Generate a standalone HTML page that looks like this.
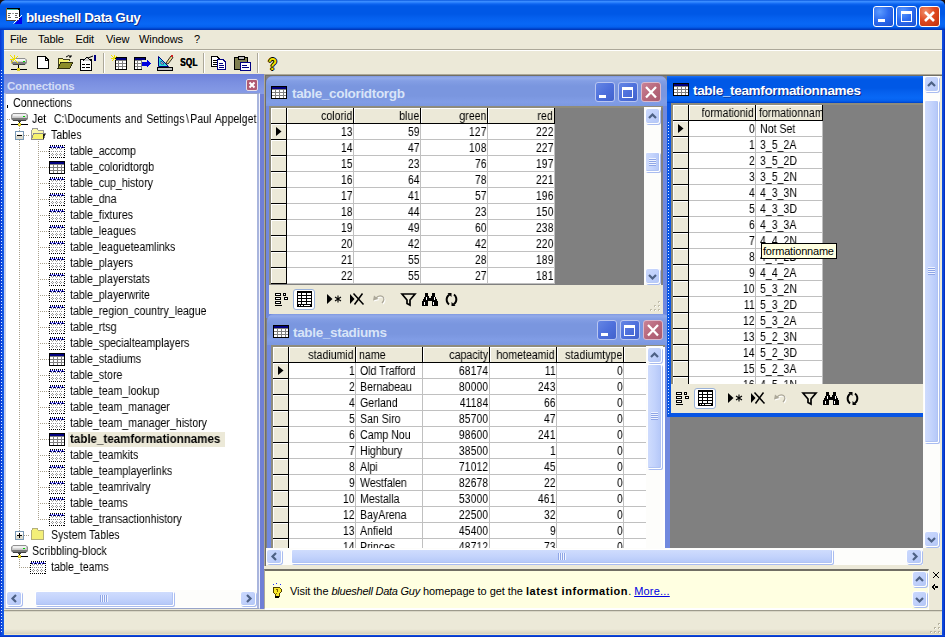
<!DOCTYPE html>
<html><head><meta charset="utf-8"><title>blueshell Data Guy</title>
<style>
*{box-sizing:border-box}
html,body{margin:0;padding:0}
body{width:945px;height:637px;overflow:hidden;position:relative;background:#ece9d8;font-family:"Liberation Sans",sans-serif;font-size:11px;color:#000;line-height:1}
.a{position:absolute}
.t{position:absolute;white-space:pre}
/* narrow bitmap-like font (MS Sans Serif look) */
.ms{will-change:transform;font-size:12.3px;display:inline-block;transform:scaleX(.86);transform-origin:0 50%;white-space:pre}
.msr{will-change:transform;font-size:12.3px;display:inline-block;transform:scaleX(.86);transform-origin:100% 50%;white-space:pre}
#title{left:0;top:0;width:945px;height:30px;background:linear-gradient(#0a58de 0,#3a8cff 1.5px,#2a80fc 2.5px,#0d64f0 4px,#0058e6 6px,#0058e6 14px,#0560ee 18px,#0868f6 24px,#0560ee 27px,#0048d0 28.5px,#0030b0 30px)}
.tb{position:absolute;top:6px;width:21px;height:21px;border:1px solid #fff;border-radius:3px;background:radial-gradient(circle at 30% 25%,#5c9bff 0,#2d6cf0 45%,#1c50d0 100%)}
.tb.cl{background:radial-gradient(circle at 30% 25%,#f0906c 0,#e04a22 45%,#c0300c 100%)}
.cb{position:absolute;width:20px;height:20px;border:1px solid #b9c6f1;border-radius:3px;background:linear-gradient(135deg,#6586e4 0,#4e70dc 50%,#4262cc 100%)}
.cb.cl{border-color:#d9b9cc;background:linear-gradient(135deg,#c98296 0,#b8687c 50%,#a85a70 100%)}
.menu{top:30px;height:19px;line-height:19px;font-size:11px}
.sb{background:#fdfdfb}
.sbtn{position:absolute;width:15px;height:15px;border:1px solid #fff;border-radius:3px;background:linear-gradient(135deg,#cad8fd 0,#c1d1fb 50%,#b3c6f7 100%);box-shadow:1px 1px 0 #a9bcf0,inset -1px -1px 0 #b7c9f5}
.thumbv{position:absolute;border:1px solid #fff;border-radius:2px;background:linear-gradient(90deg,#cfdcfd 0,#c3d3fc 50%,#b4c7f8 100%);box-shadow:1px 1px 0 #a9bcf0,inset -1px -1px 0 #b0c3f3}
.thumbh{position:absolute;border:1px solid #fff;border-radius:2px;background:linear-gradient(180deg,#cfdcfd 0,#c3d3fc 50%,#b4c7f8 100%);box-shadow:1px 1px 0 #a9bcf0,inset -1px -1px 0 #b0c3f3}
.hc{position:absolute;height:16px;background:#ece9d8;border-right:1px solid #000;border-bottom:1px solid #000;box-shadow:inset 1px 1px 0 #fff;overflow:hidden;line-height:15px}
.dc{position:absolute;height:16px;background:#fff;border-right:1px solid #c0c0c0;border-bottom:1px solid #c0c0c0;overflow:hidden;line-height:16px}
.r>span{position:absolute;right:1px;top:0}
.l>span{position:absolute;left:4px;top:0}
.hc>span{top:1px}
.hc.l>span{left:3px}
.dc.r>span{right:.5px}
.trow{position:absolute;left:0;height:16px;line-height:16px;white-space:pre}
svg{position:absolute;overflow:visible}
</style></head>
<body>
<div class="a" id="title"></div>
<div class="a" style="left:0;top:30px;width:4px;height:607px;background:linear-gradient(90deg,#0a34d0 0,#0c50e2 50%,#1a5fe8 100%)"></div>
<div class="a" style="left:942px;top:30px;width:3px;height:607px;background:linear-gradient(90deg,#0c50e2 0,#0a3fd4 60%,#0628b0 100%)"></div>
<div class="a" style="left:0;top:634.5px;width:945px;height:2.5px;background:linear-gradient(#0c50e2 0,#0a3fd4 60%,#0628b0 100%)"></div>
<div class="a" style="left:1px;top:70px;width:1px;height:564px;background:repeating-linear-gradient(180deg,#dfe8ff 0,#dfe8ff 1px,transparent 1px,transparent 3px)"></div>
<svg style="left:0;top:0" width="6" height="6" viewBox="0 0 6 6"><path d="M0 0 H5 Q1 1 0 5 Z" fill="#1a0f10"/></svg>
<svg style="left:939px;top:0" width="6" height="6" viewBox="0 0 6 6"><path d="M6 0 H1 Q5 1 6 5 Z" fill="#1a0f10"/></svg>
<svg style="left:6px;top:8px" width="16" height="16" viewBox="0 0 16 16" shape-rendering="crispEdges"><rect x="0" y="0" width="14" height="12" fill="#fff" stroke="none"/><rect x="0" y="0" width="14" height="2" fill="#000"/><rect x="1" y="1" width="11" height="1" fill="#30b0a0"/><rect x="0" y="0" width="1" height="12" fill="#806040"/><rect x="13" y="0" width="1" height="12" fill="#000"/><rect x="0" y="12" width="14" height="1" fill="#404040"/><rect x="2" y="5" width="3" height="1" fill="#606060"/><rect x="6" y="5" width="2" height="1" fill="#a0a0a0"/><rect x="9" y="5" width="3" height="1" fill="#606060"/><rect x="2" y="7" width="2" height="1" fill="#606060"/><rect x="9" y="7" width="2" height="1" fill="#606060"/><rect x="2" y="9" width="3" height="1" fill="#606060"/><rect x="9" y="9" width="3" height="1" fill="#606060"/><path d="M8 16 L16 8 V16 Z" fill="#0000f0"/><path d="M7.5 15.5 L16 7" stroke="#fff" stroke-width="1" fill="none" shape-rendering="auto"/></svg><div class="t" style="left:26px;top:10px;font-weight:bold;font-size:13.5px;line-height:16px;color:#fff;letter-spacing:-.4px;text-shadow:1px 1px 0 #0a2a8a">blueshell Data Guy</div><div class="tb" style="left:873px"></div><div class="tb" style="left:896px"></div><div class="tb cl" style="left:919px"></div>
<div class="a" style="left:878px;top:19px;width:7px;height:3px;background:#fff"></div>
<div class="a" style="left:901px;top:11px;width:11px;height:11px;border:1px solid #fff;border-top-width:3px"></div>
<svg style="left:919px;top:6px" width="21" height="21" viewBox="0 0 21 21"><path d="M6 6 L15 15 M15 6 L6 15" stroke="#fff" stroke-width="2.6" fill="none"/></svg><div class="t menu" style="left:10px;letter-spacing:-.1px">File</div><div class="t menu" style="left:38px;letter-spacing:-.1px">Table</div><div class="t menu" style="left:75.5px;letter-spacing:-.1px">Edit</div><div class="t menu" style="left:106px;letter-spacing:-.1px">View</div><div class="t menu" style="left:139px;letter-spacing:-.1px">Windows</div><div class="t menu" style="left:194px;letter-spacing:-.1px">?</div>
<div class="a" style="left:4px;top:49px;width:938px;height:1px;background:#aca899"></div>
<div class="a" style="left:4px;top:50px;width:938px;height:1px;background:#fff"></div>
<svg style="left:10px;top:55px" width="17" height="17" viewBox="0 0 17 17" shape-rendering="crispEdges"><path d="M3 3.5 H15 L16.5 5 V8 L15 9.5 H3 L1.5 8 V5 Z" fill="#d0d0d0" stroke="#909090" shape-rendering="auto"/><rect x="3" y="4" width="12" height="2" fill="#f4f4f4"/><rect x="2" y="7" width="14" height="2" fill="#808080"/><rect x="3" y="9" width="12" height="1" fill="#404040"/><rect x="13" y="6" width="2" height="1" fill="#00d000"/><rect x="8" y="10" width="1" height="4" fill="#000"/><path d="M0.5 0.5 L8 8 M4 0 V5 M0 4 H5 M8 1 L5 4 M1 8 L4 5" stroke="#f0e000" stroke-width="1" fill="none"/><rect x="1" y="14" width="16" height="1" fill="#000"/><rect x="7" y="13" width="3" height="3" fill="#d8c820"/></svg>
<svg style="left:37px;top:56px" width="12" height="14" viewBox="0 0 12 14" shape-rendering="crispEdges"><path d="M0.5 0.5 H8 L11.5 4 V12.5 H0.5 Z" fill="#fff" stroke="#000"/><path d="M8 0.5 V4 H11.5" fill="none" stroke="#000"/></svg>
<svg style="left:57px;top:54px" width="17" height="16" viewBox="0 0 17 16" shape-rendering="crispEdges"><path d="M1 14 V5 L2 4 H5 L6 5 H12 V7" fill="#f6f270" stroke="#404020"/><path d="M1 14 L4 8 H16 L13 14 Z" fill="#8c8c28" stroke="#303010"/><path d="M9 3 Q12 0 14 3 M14 3 L14 1 M14 3 L12 3" stroke="#000" fill="none" shape-rendering="auto"/></svg>
<svg style="left:80px;top:55px" width="17" height="16" viewBox="0 0 17 16" shape-rendering="crispEdges"><rect x="0.5" y="4.5" width="11" height="11" fill="#fff" stroke="#000"/><rect x="2" y="9" width="3" height="1" fill="#000"/><rect x="6" y="9" width="4" height="1" fill="#000"/><rect x="2" y="12" width="3" height="1" fill="#000"/><rect x="6" y="12" width="4" height="1" fill="#000"/><path d="M3 6 L7 2 L11 6" fill="#d0d0d0" stroke="#000" shape-rendering="auto"/><path d="M8 3 L13 1 " stroke="#000" fill="none" shape-rendering="auto"/><rect x="14" y="0" width="2" height="6" fill="#000080"/></svg>
<div class="a" style="left:103px;top:53px;width:1px;height:20px;background:#aca899"></div>
<div class="a" style="left:104px;top:53px;width:1px;height:20px;background:#fff"></div>
<svg style="left:111px;top:55px" width="17" height="17" viewBox="0 0 17 17" shape-rendering="crispEdges"><g transform="translate(4,2)"><rect x="0" y="0" width="12" height="13" fill="#000"/><rect x="1" y="1" width="10" height="2" fill="#000080"/><rect x="1" y="3" width="10" height="9" fill="#808080"/><rect x="1" y="4" width="2" height="2" fill="#fff"/><rect x="4" y="4" width="3" height="2" fill="#fff"/><rect x="8" y="4" width="3" height="2" fill="#fff"/><rect x="1" y="7" width="2" height="2" fill="#fff"/><rect x="4" y="7" width="3" height="2" fill="#fff"/><rect x="8" y="7" width="3" height="2" fill="#fff"/><rect x="1" y="10" width="2" height="2" fill="#fff"/><rect x="4" y="10" width="3" height="2" fill="#fff"/><rect x="8" y="10" width="3" height="2" fill="#fff"/></g><path d="M0.5 0.5 L5.5 5.5 M3 0 V3 M0 3 H3 M6 1 L4 3 M1 6 L3 4" stroke="#f0e000" stroke-width="1" fill="none"/></svg>
<svg style="left:134px;top:57px" width="17" height="14" viewBox="0 0 17 14" shape-rendering="crispEdges"><g transform="translate(0,0)"><rect x="0" y="0" width="12" height="13" fill="#000"/><rect x="1" y="1" width="10" height="2" fill="#000080"/><rect x="1" y="3" width="10" height="9" fill="#808080"/><rect x="1" y="4" width="2" height="2" fill="#fff"/><rect x="4" y="4" width="3" height="2" fill="#fff"/><rect x="8" y="4" width="3" height="2" fill="#fff"/><rect x="1" y="7" width="2" height="2" fill="#fff"/><rect x="4" y="7" width="3" height="2" fill="#fff"/><rect x="8" y="7" width="3" height="2" fill="#fff"/><rect x="1" y="10" width="2" height="2" fill="#fff"/><rect x="4" y="10" width="3" height="2" fill="#fff"/><rect x="8" y="10" width="3" height="2" fill="#fff"/></g><rect x="8" y="3" width="9" height="7" fill="#ece9d8"/><rect x="8" y="10" width="4" height="3" fill="#ece9d8"/><path d="M8 5 H13 V3 L17 6.8 L13 10.5 V8.5 H8 Z" fill="#0000e0"/></svg>
<svg style="left:157px;top:54px" width="17" height="17" viewBox="0 0 17 17" shape-rendering="crispEdges"><path d="M1.5 12.5 V2.5 L11.5 12.5 Z" fill="#30d8d8" stroke="#000080" shape-rendering="auto"/><path d="M4 10 V7 L7 10 Z" fill="#ece9d8" stroke="#000080" stroke-width=".6" shape-rendering="auto"/><rect x="0" y="13" width="15" height="3" fill="#c0c0c0" stroke="#000" stroke-width="1"/><path d="M9 9 L14 2 L16 3.5 L11 10 Z" fill="#f0d890" stroke="#000" stroke-width=".8" shape-rendering="auto"/><circle cx="15" cy="2" r="1.5" fill="#d02020"/></svg><div class="t" style="left:179.5px;top:55px;font-weight:bold;font-size:11px;line-height:14px;letter-spacing:.3px;transform:scaleX(.74);transform-origin:0 0;text-shadow:.6px 0 0 #000">SQL</div>
<div class="a" style="left:203px;top:53px;width:1px;height:20px;background:#aca899"></div>
<div class="a" style="left:204px;top:53px;width:1px;height:20px;background:#fff"></div>
<svg style="left:211px;top:56px" width="16" height="15" viewBox="0 0 16 15" shape-rendering="crispEdges"><g transform="translate(0,0)"><path d="M0.5 0.5 H6 L8.5 3 V10.5 H0.5 Z" fill="#fff" stroke="#000"/><rect x="2" y="4" width="4" height="1" fill="#000"/><rect x="2" y="6" width="5" height="1" fill="#000"/><rect x="2" y="8" width="5" height="1" fill="#000"/></g><g transform="translate(6,3)"><path d="M0.5 0.5 H6 L8.5 3 V10.5 H0.5 Z" fill="#fff" stroke="#000080"/><rect x="2" y="4" width="4" height="1" fill="#000080"/><rect x="2" y="6" width="5" height="1" fill="#000080"/><rect x="2" y="8" width="5" height="1" fill="#000080"/></g></svg>
<svg style="left:234px;top:55px" width="17" height="17" viewBox="0 0 17 17" shape-rendering="crispEdges"><rect x="0.5" y="2.5" width="13" height="12" fill="#808050" stroke="#000"/><rect x="4" y="1" width="6" height="3" fill="#c0c0c0" stroke="#000" stroke-width="1"/><rect x="6.5" y="7.5" width="10" height="8" fill="#fff" stroke="#000080"/><rect x="8" y="10" width="5" height="1" fill="#000080"/><rect x="8" y="12" width="7" height="1" fill="#000080"/></svg>
<div class="a" style="left:257px;top:53px;width:1px;height:20px;background:#aca899"></div>
<div class="a" style="left:258px;top:53px;width:1px;height:20px;background:#fff"></div><div class="t" style="left:268px;top:54px;font-weight:bold;font-size:16.5px;line-height:20px;transform:scaleX(.9);transform-origin:0 0;color:#f0e000;text-shadow:-1px 0 0 #000,1px 0 0 #000,0 -1px 0 #000,0 1px 0 #000">?</div>
<div class="a" style="left:4px;top:74px;width:260px;height:535px;background:#6f7fd6"></div>
<div class="a" style="left:4px;top:74px;width:260px;height:20px;background:linear-gradient(#6e80da 0,#7a8fe0 40%,#879ce6 100%)"></div><div class="t" style="left:7px;top:79px;font-weight:bold;font-size:11.5px;line-height:14px;color:#d3dcf6;letter-spacing:-.2px">Connections</div>
<div class="a" style="left:246px;top:79px;width:12px;height:12px;border:1px solid #e8e0ea;border-radius:2px;background:#b05a72"></div>
<svg style="left:246px;top:79px" width="12" height="12" viewBox="0 0 12 12"><path d="M3.5 3.5 L8.5 8.5 M8.5 3.5 L3.5 8.5" stroke="#fff" stroke-width="2" fill="none"/></svg>
<div class="a" style="left:4px;top:93px;width:256px;height:516px;background:#fff;border:1px solid #98a4c8;border-left:2px solid #c8d0ec;border-right:1px solid #f0f2fb"></div>
<div class="a" style="left:257px;top:94px;width:2px;height:514px;background:#a9b5dd"></div>
<div class="a" id="tree" style="left:6px;top:95px;width:251px;height:495px;overflow:hidden;background:#fff">
<div class="a" style="left:13px;top:45px;width:1px;height:395px;background:repeating-linear-gradient(180deg,#a8a08c 0,#a8a08c 1px,transparent 1px,transparent 2px)"></div>
<div class="a" style="left:32px;top:46px;width:1px;height:378px;background:repeating-linear-gradient(180deg,#a8a08c 0,#a8a08c 1px,transparent 1px,transparent 2px)"></div>
<div class="a" style="left:18px;top:40px;width:6px;height:1px;background:repeating-linear-gradient(90deg,#a8a08c 0,#a8a08c 1px,transparent 1px,transparent 2px)"></div>
<div class="a" style="left:1px;top:24px;width:4px;height:1px;background:repeating-linear-gradient(90deg,#a8a08c 0,#a8a08c 1px,transparent 1px,transparent 2px)"></div>
<div class="a" style="left:13px;top:31px;width:1px;height:5px;background:repeating-linear-gradient(180deg,#a8a08c 0,#a8a08c 1px,transparent 1px,transparent 2px)"></div>
<div class="a" style="left:18px;top:440px;width:6px;height:1px;background:repeating-linear-gradient(90deg,#a8a08c 0,#a8a08c 1px,transparent 1px,transparent 2px)"></div>
<div class="a" style="left:13px;top:462px;width:1px;height:10px;background:repeating-linear-gradient(180deg,#a8a08c 0,#a8a08c 1px,transparent 1px,transparent 2px)"></div>
<div class="a" style="left:13px;top:472px;width:11px;height:1px;background:repeating-linear-gradient(90deg,#a8a08c 0,#a8a08c 1px,transparent 1px,transparent 2px)"></div>
<div class="a" style="left:1px;top:10px;width:1px;height:3px;background:#000"></div><div class="trow" style="top:0px;left:7px"><span class="ms">Connections</span></div>
<svg style="left:5px;top:18px" width="17" height="14" viewBox="0 0 17 14" shape-rendering="crispEdges"><path d="M2 0.5 H15 L16.5 2 V6 L15 7.5 H2 L0.5 6 V2 Z" fill="#c8c8c8" stroke="#909090" stroke-width="1" shape-rendering="auto"/><rect x="2" y="1" width="13" height="2" fill="#f0f0f0"/><rect x="2" y="3" width="13" height="1" fill="#d8d8d8"/><rect x="1" y="5" width="15" height="2" fill="#787878"/><rect x="2" y="7" width="13" height="1" fill="#404040"/><rect x="12" y="3" width="2" height="1" fill="#00d000"/><rect x="7" y="8" width="3" height="1" fill="#404040"/><rect x="8" y="9" width="1" height="2" fill="#000"/><rect x="0" y="11" width="17" height="1" fill="#000"/><rect x="7" y="10" width="3" height="3" fill="#d8c820"/><rect x="8" y="11" width="1" height="1" fill="#fff8a0"/></svg><div class="trow" style="top:16px;left:26px"><span class="ms" style="word-spacing:1.1px">Jet  C:\Documents and Settings<span style="padding:0 1.6px">\</span>Paul Appelget</span></div>
<svg style="left:9px;top:36px" width="9" height="9" viewBox="0 0 9 9" shape-rendering="crispEdges"><rect x="0.5" y="0.5" width="8" height="8" rx="1" fill="#fff" stroke="#7898b5"/><rect x="1" y="5" width="7" height="3" fill="#dcdacc"/><rect x="1" y="3" width="7" height="2" fill="#f2f1ea"/><rect x="2" y="4" width="5" height="1" fill="#000"/></svg>
<svg style="left:24px;top:33px" width="17" height="13" viewBox="0 0 17 13" shape-rendering="crispEdges"><path d="M1.5 11.5 V2.5 L3 0.5 H7 L8.5 2.5 H13.5 V5" fill="#fbf9a8" stroke="#9c9c9c" stroke-width="1"/><path d="M1.5 11.5 L3.5 5.5 H15.5 L13.5 11.5 Z" fill="#f7f36c" stroke="#8c8c8c" stroke-width="1"/><path d="M13 6 H15 L14 11 H13 Z" fill="#202020"/></svg><div class="trow" style="top:32px;left:45px"><span class="ms">Tables</span></div>
<div class="a" style="left:32px;top:56px;width:11px;height:1px;background:repeating-linear-gradient(90deg,#a8a08c 0,#a8a08c 1px,transparent 1px,transparent 2px)"></div>
<svg style="left:43px;top:50px" width="16" height="13" viewBox="0 0 16 13" shape-rendering="crispEdges"><rect x="0" y="0" width="16" height="13" fill="#fff"/><rect x="0.5" y="0.5" width="15" height="12" fill="none" stroke="#000" stroke-width="1" stroke-dasharray="1 1"/><path d="M1 1.5 H15" stroke="#0000c8" stroke-dasharray="1 1" fill="none"/><path d="M2 2.5 H15" stroke="#0000c8" stroke-dasharray="1 1" fill="none"/><path d="M1 2.5 H15" stroke="#000" stroke-dasharray="1 3" fill="none"/><path d="M2 3.5 H14" stroke="#909090" stroke-dasharray="1 1" fill="none"/><path d="M3 4.5 H14" stroke="#b0b0b0" stroke-dasharray="1 3" fill="none"/><path d="M2 6.5 H14" stroke="#909090" stroke-dasharray="1 1" fill="none"/><path d="M3 8.5 H14" stroke="#909090" stroke-dasharray="1 3" fill="none"/><path d="M2 9.5 H15" stroke="#a0a0a0" stroke-dasharray="1 1" fill="none"/><path d="M3 10.5 H14" stroke="#909090" stroke-dasharray="1 3" fill="none"/></svg><div class="trow" style="top:48px;left:64px"><span class="ms">table_accomp</span></div>
<div class="a" style="left:32px;top:72px;width:11px;height:1px;background:repeating-linear-gradient(90deg,#a8a08c 0,#a8a08c 1px,transparent 1px,transparent 2px)"></div>
<svg style="left:43px;top:66px" width="16" height="13" viewBox="0 0 16 13" shape-rendering="crispEdges"><rect x="0" y="0" width="16" height="13" fill="#000"/><rect x="1" y="1" width="14" height="2" fill="#000080"/><rect x="1" y="3" width="14" height="9" fill="#808080"/><rect x="1" y="4" width="3" height="2" fill="#fff"/><rect x="5" y="4" width="3" height="2" fill="#fff"/><rect x="9" y="4" width="3" height="2" fill="#fff"/><rect x="13" y="4" width="2" height="2" fill="#fff"/><rect x="1" y="7" width="3" height="2" fill="#fff"/><rect x="5" y="7" width="3" height="2" fill="#fff"/><rect x="9" y="7" width="3" height="2" fill="#fff"/><rect x="13" y="7" width="2" height="2" fill="#fff"/><rect x="1" y="10" width="3" height="2" fill="#fff"/><rect x="5" y="10" width="3" height="2" fill="#fff"/><rect x="9" y="10" width="3" height="2" fill="#fff"/><rect x="13" y="10" width="2" height="2" fill="#fff"/></svg><div class="trow" style="top:64px;left:64px"><span class="ms">table_coloridtorgb</span></div>
<div class="a" style="left:32px;top:88px;width:11px;height:1px;background:repeating-linear-gradient(90deg,#a8a08c 0,#a8a08c 1px,transparent 1px,transparent 2px)"></div>
<svg style="left:43px;top:82px" width="16" height="13" viewBox="0 0 16 13" shape-rendering="crispEdges"><rect x="0" y="0" width="16" height="13" fill="#fff"/><rect x="0.5" y="0.5" width="15" height="12" fill="none" stroke="#000" stroke-width="1" stroke-dasharray="1 1"/><path d="M1 1.5 H15" stroke="#0000c8" stroke-dasharray="1 1" fill="none"/><path d="M2 2.5 H15" stroke="#0000c8" stroke-dasharray="1 1" fill="none"/><path d="M1 2.5 H15" stroke="#000" stroke-dasharray="1 3" fill="none"/><path d="M2 3.5 H14" stroke="#909090" stroke-dasharray="1 1" fill="none"/><path d="M3 4.5 H14" stroke="#b0b0b0" stroke-dasharray="1 3" fill="none"/><path d="M2 6.5 H14" stroke="#909090" stroke-dasharray="1 1" fill="none"/><path d="M3 8.5 H14" stroke="#909090" stroke-dasharray="1 3" fill="none"/><path d="M2 9.5 H15" stroke="#a0a0a0" stroke-dasharray="1 1" fill="none"/><path d="M3 10.5 H14" stroke="#909090" stroke-dasharray="1 3" fill="none"/></svg><div class="trow" style="top:80px;left:64px"><span class="ms">table_cup_history</span></div>
<div class="a" style="left:32px;top:104px;width:11px;height:1px;background:repeating-linear-gradient(90deg,#a8a08c 0,#a8a08c 1px,transparent 1px,transparent 2px)"></div>
<svg style="left:43px;top:98px" width="16" height="13" viewBox="0 0 16 13" shape-rendering="crispEdges"><rect x="0" y="0" width="16" height="13" fill="#fff"/><rect x="0.5" y="0.5" width="15" height="12" fill="none" stroke="#000" stroke-width="1" stroke-dasharray="1 1"/><path d="M1 1.5 H15" stroke="#0000c8" stroke-dasharray="1 1" fill="none"/><path d="M2 2.5 H15" stroke="#0000c8" stroke-dasharray="1 1" fill="none"/><path d="M1 2.5 H15" stroke="#000" stroke-dasharray="1 3" fill="none"/><path d="M2 3.5 H14" stroke="#909090" stroke-dasharray="1 1" fill="none"/><path d="M3 4.5 H14" stroke="#b0b0b0" stroke-dasharray="1 3" fill="none"/><path d="M2 6.5 H14" stroke="#909090" stroke-dasharray="1 1" fill="none"/><path d="M3 8.5 H14" stroke="#909090" stroke-dasharray="1 3" fill="none"/><path d="M2 9.5 H15" stroke="#a0a0a0" stroke-dasharray="1 1" fill="none"/><path d="M3 10.5 H14" stroke="#909090" stroke-dasharray="1 3" fill="none"/></svg><div class="trow" style="top:96px;left:64px"><span class="ms">table_dna</span></div>
<div class="a" style="left:32px;top:120px;width:11px;height:1px;background:repeating-linear-gradient(90deg,#a8a08c 0,#a8a08c 1px,transparent 1px,transparent 2px)"></div>
<svg style="left:43px;top:114px" width="16" height="13" viewBox="0 0 16 13" shape-rendering="crispEdges"><rect x="0" y="0" width="16" height="13" fill="#fff"/><rect x="0.5" y="0.5" width="15" height="12" fill="none" stroke="#000" stroke-width="1" stroke-dasharray="1 1"/><path d="M1 1.5 H15" stroke="#0000c8" stroke-dasharray="1 1" fill="none"/><path d="M2 2.5 H15" stroke="#0000c8" stroke-dasharray="1 1" fill="none"/><path d="M1 2.5 H15" stroke="#000" stroke-dasharray="1 3" fill="none"/><path d="M2 3.5 H14" stroke="#909090" stroke-dasharray="1 1" fill="none"/><path d="M3 4.5 H14" stroke="#b0b0b0" stroke-dasharray="1 3" fill="none"/><path d="M2 6.5 H14" stroke="#909090" stroke-dasharray="1 1" fill="none"/><path d="M3 8.5 H14" stroke="#909090" stroke-dasharray="1 3" fill="none"/><path d="M2 9.5 H15" stroke="#a0a0a0" stroke-dasharray="1 1" fill="none"/><path d="M3 10.5 H14" stroke="#909090" stroke-dasharray="1 3" fill="none"/></svg><div class="trow" style="top:112px;left:64px"><span class="ms">table_fixtures</span></div>
<div class="a" style="left:32px;top:136px;width:11px;height:1px;background:repeating-linear-gradient(90deg,#a8a08c 0,#a8a08c 1px,transparent 1px,transparent 2px)"></div>
<svg style="left:43px;top:130px" width="16" height="13" viewBox="0 0 16 13" shape-rendering="crispEdges"><rect x="0" y="0" width="16" height="13" fill="#fff"/><rect x="0.5" y="0.5" width="15" height="12" fill="none" stroke="#000" stroke-width="1" stroke-dasharray="1 1"/><path d="M1 1.5 H15" stroke="#0000c8" stroke-dasharray="1 1" fill="none"/><path d="M2 2.5 H15" stroke="#0000c8" stroke-dasharray="1 1" fill="none"/><path d="M1 2.5 H15" stroke="#000" stroke-dasharray="1 3" fill="none"/><path d="M2 3.5 H14" stroke="#909090" stroke-dasharray="1 1" fill="none"/><path d="M3 4.5 H14" stroke="#b0b0b0" stroke-dasharray="1 3" fill="none"/><path d="M2 6.5 H14" stroke="#909090" stroke-dasharray="1 1" fill="none"/><path d="M3 8.5 H14" stroke="#909090" stroke-dasharray="1 3" fill="none"/><path d="M2 9.5 H15" stroke="#a0a0a0" stroke-dasharray="1 1" fill="none"/><path d="M3 10.5 H14" stroke="#909090" stroke-dasharray="1 3" fill="none"/></svg><div class="trow" style="top:128px;left:64px"><span class="ms">table_leagues</span></div>
<div class="a" style="left:32px;top:152px;width:11px;height:1px;background:repeating-linear-gradient(90deg,#a8a08c 0,#a8a08c 1px,transparent 1px,transparent 2px)"></div>
<svg style="left:43px;top:146px" width="16" height="13" viewBox="0 0 16 13" shape-rendering="crispEdges"><rect x="0" y="0" width="16" height="13" fill="#fff"/><rect x="0.5" y="0.5" width="15" height="12" fill="none" stroke="#000" stroke-width="1" stroke-dasharray="1 1"/><path d="M1 1.5 H15" stroke="#0000c8" stroke-dasharray="1 1" fill="none"/><path d="M2 2.5 H15" stroke="#0000c8" stroke-dasharray="1 1" fill="none"/><path d="M1 2.5 H15" stroke="#000" stroke-dasharray="1 3" fill="none"/><path d="M2 3.5 H14" stroke="#909090" stroke-dasharray="1 1" fill="none"/><path d="M3 4.5 H14" stroke="#b0b0b0" stroke-dasharray="1 3" fill="none"/><path d="M2 6.5 H14" stroke="#909090" stroke-dasharray="1 1" fill="none"/><path d="M3 8.5 H14" stroke="#909090" stroke-dasharray="1 3" fill="none"/><path d="M2 9.5 H15" stroke="#a0a0a0" stroke-dasharray="1 1" fill="none"/><path d="M3 10.5 H14" stroke="#909090" stroke-dasharray="1 3" fill="none"/></svg><div class="trow" style="top:144px;left:64px"><span class="ms">table_leagueteamlinks</span></div>
<div class="a" style="left:32px;top:168px;width:11px;height:1px;background:repeating-linear-gradient(90deg,#a8a08c 0,#a8a08c 1px,transparent 1px,transparent 2px)"></div>
<svg style="left:43px;top:162px" width="16" height="13" viewBox="0 0 16 13" shape-rendering="crispEdges"><rect x="0" y="0" width="16" height="13" fill="#fff"/><rect x="0.5" y="0.5" width="15" height="12" fill="none" stroke="#000" stroke-width="1" stroke-dasharray="1 1"/><path d="M1 1.5 H15" stroke="#0000c8" stroke-dasharray="1 1" fill="none"/><path d="M2 2.5 H15" stroke="#0000c8" stroke-dasharray="1 1" fill="none"/><path d="M1 2.5 H15" stroke="#000" stroke-dasharray="1 3" fill="none"/><path d="M2 3.5 H14" stroke="#909090" stroke-dasharray="1 1" fill="none"/><path d="M3 4.5 H14" stroke="#b0b0b0" stroke-dasharray="1 3" fill="none"/><path d="M2 6.5 H14" stroke="#909090" stroke-dasharray="1 1" fill="none"/><path d="M3 8.5 H14" stroke="#909090" stroke-dasharray="1 3" fill="none"/><path d="M2 9.5 H15" stroke="#a0a0a0" stroke-dasharray="1 1" fill="none"/><path d="M3 10.5 H14" stroke="#909090" stroke-dasharray="1 3" fill="none"/></svg><div class="trow" style="top:160px;left:64px"><span class="ms">table_players</span></div>
<div class="a" style="left:32px;top:184px;width:11px;height:1px;background:repeating-linear-gradient(90deg,#a8a08c 0,#a8a08c 1px,transparent 1px,transparent 2px)"></div>
<svg style="left:43px;top:178px" width="16" height="13" viewBox="0 0 16 13" shape-rendering="crispEdges"><rect x="0" y="0" width="16" height="13" fill="#fff"/><rect x="0.5" y="0.5" width="15" height="12" fill="none" stroke="#000" stroke-width="1" stroke-dasharray="1 1"/><path d="M1 1.5 H15" stroke="#0000c8" stroke-dasharray="1 1" fill="none"/><path d="M2 2.5 H15" stroke="#0000c8" stroke-dasharray="1 1" fill="none"/><path d="M1 2.5 H15" stroke="#000" stroke-dasharray="1 3" fill="none"/><path d="M2 3.5 H14" stroke="#909090" stroke-dasharray="1 1" fill="none"/><path d="M3 4.5 H14" stroke="#b0b0b0" stroke-dasharray="1 3" fill="none"/><path d="M2 6.5 H14" stroke="#909090" stroke-dasharray="1 1" fill="none"/><path d="M3 8.5 H14" stroke="#909090" stroke-dasharray="1 3" fill="none"/><path d="M2 9.5 H15" stroke="#a0a0a0" stroke-dasharray="1 1" fill="none"/><path d="M3 10.5 H14" stroke="#909090" stroke-dasharray="1 3" fill="none"/></svg><div class="trow" style="top:176px;left:64px"><span class="ms">table_playerstats</span></div>
<div class="a" style="left:32px;top:200px;width:11px;height:1px;background:repeating-linear-gradient(90deg,#a8a08c 0,#a8a08c 1px,transparent 1px,transparent 2px)"></div>
<svg style="left:43px;top:194px" width="16" height="13" viewBox="0 0 16 13" shape-rendering="crispEdges"><rect x="0" y="0" width="16" height="13" fill="#fff"/><rect x="0.5" y="0.5" width="15" height="12" fill="none" stroke="#000" stroke-width="1" stroke-dasharray="1 1"/><path d="M1 1.5 H15" stroke="#0000c8" stroke-dasharray="1 1" fill="none"/><path d="M2 2.5 H15" stroke="#0000c8" stroke-dasharray="1 1" fill="none"/><path d="M1 2.5 H15" stroke="#000" stroke-dasharray="1 3" fill="none"/><path d="M2 3.5 H14" stroke="#909090" stroke-dasharray="1 1" fill="none"/><path d="M3 4.5 H14" stroke="#b0b0b0" stroke-dasharray="1 3" fill="none"/><path d="M2 6.5 H14" stroke="#909090" stroke-dasharray="1 1" fill="none"/><path d="M3 8.5 H14" stroke="#909090" stroke-dasharray="1 3" fill="none"/><path d="M2 9.5 H15" stroke="#a0a0a0" stroke-dasharray="1 1" fill="none"/><path d="M3 10.5 H14" stroke="#909090" stroke-dasharray="1 3" fill="none"/></svg><div class="trow" style="top:192px;left:64px"><span class="ms">table_playerwrite</span></div>
<div class="a" style="left:32px;top:216px;width:11px;height:1px;background:repeating-linear-gradient(90deg,#a8a08c 0,#a8a08c 1px,transparent 1px,transparent 2px)"></div>
<svg style="left:43px;top:210px" width="16" height="13" viewBox="0 0 16 13" shape-rendering="crispEdges"><rect x="0" y="0" width="16" height="13" fill="#fff"/><rect x="0.5" y="0.5" width="15" height="12" fill="none" stroke="#000" stroke-width="1" stroke-dasharray="1 1"/><path d="M1 1.5 H15" stroke="#0000c8" stroke-dasharray="1 1" fill="none"/><path d="M2 2.5 H15" stroke="#0000c8" stroke-dasharray="1 1" fill="none"/><path d="M1 2.5 H15" stroke="#000" stroke-dasharray="1 3" fill="none"/><path d="M2 3.5 H14" stroke="#909090" stroke-dasharray="1 1" fill="none"/><path d="M3 4.5 H14" stroke="#b0b0b0" stroke-dasharray="1 3" fill="none"/><path d="M2 6.5 H14" stroke="#909090" stroke-dasharray="1 1" fill="none"/><path d="M3 8.5 H14" stroke="#909090" stroke-dasharray="1 3" fill="none"/><path d="M2 9.5 H15" stroke="#a0a0a0" stroke-dasharray="1 1" fill="none"/><path d="M3 10.5 H14" stroke="#909090" stroke-dasharray="1 3" fill="none"/></svg><div class="trow" style="top:208px;left:64px"><span class="ms">table_region_country_league</span></div>
<div class="a" style="left:32px;top:232px;width:11px;height:1px;background:repeating-linear-gradient(90deg,#a8a08c 0,#a8a08c 1px,transparent 1px,transparent 2px)"></div>
<svg style="left:43px;top:226px" width="16" height="13" viewBox="0 0 16 13" shape-rendering="crispEdges"><rect x="0" y="0" width="16" height="13" fill="#fff"/><rect x="0.5" y="0.5" width="15" height="12" fill="none" stroke="#000" stroke-width="1" stroke-dasharray="1 1"/><path d="M1 1.5 H15" stroke="#0000c8" stroke-dasharray="1 1" fill="none"/><path d="M2 2.5 H15" stroke="#0000c8" stroke-dasharray="1 1" fill="none"/><path d="M1 2.5 H15" stroke="#000" stroke-dasharray="1 3" fill="none"/><path d="M2 3.5 H14" stroke="#909090" stroke-dasharray="1 1" fill="none"/><path d="M3 4.5 H14" stroke="#b0b0b0" stroke-dasharray="1 3" fill="none"/><path d="M2 6.5 H14" stroke="#909090" stroke-dasharray="1 1" fill="none"/><path d="M3 8.5 H14" stroke="#909090" stroke-dasharray="1 3" fill="none"/><path d="M2 9.5 H15" stroke="#a0a0a0" stroke-dasharray="1 1" fill="none"/><path d="M3 10.5 H14" stroke="#909090" stroke-dasharray="1 3" fill="none"/></svg><div class="trow" style="top:224px;left:64px"><span class="ms">table_rtsg</span></div>
<div class="a" style="left:32px;top:248px;width:11px;height:1px;background:repeating-linear-gradient(90deg,#a8a08c 0,#a8a08c 1px,transparent 1px,transparent 2px)"></div>
<svg style="left:43px;top:242px" width="16" height="13" viewBox="0 0 16 13" shape-rendering="crispEdges"><rect x="0" y="0" width="16" height="13" fill="#fff"/><rect x="0.5" y="0.5" width="15" height="12" fill="none" stroke="#000" stroke-width="1" stroke-dasharray="1 1"/><path d="M1 1.5 H15" stroke="#0000c8" stroke-dasharray="1 1" fill="none"/><path d="M2 2.5 H15" stroke="#0000c8" stroke-dasharray="1 1" fill="none"/><path d="M1 2.5 H15" stroke="#000" stroke-dasharray="1 3" fill="none"/><path d="M2 3.5 H14" stroke="#909090" stroke-dasharray="1 1" fill="none"/><path d="M3 4.5 H14" stroke="#b0b0b0" stroke-dasharray="1 3" fill="none"/><path d="M2 6.5 H14" stroke="#909090" stroke-dasharray="1 1" fill="none"/><path d="M3 8.5 H14" stroke="#909090" stroke-dasharray="1 3" fill="none"/><path d="M2 9.5 H15" stroke="#a0a0a0" stroke-dasharray="1 1" fill="none"/><path d="M3 10.5 H14" stroke="#909090" stroke-dasharray="1 3" fill="none"/></svg><div class="trow" style="top:240px;left:64px"><span class="ms">table_specialteamplayers</span></div>
<div class="a" style="left:32px;top:264px;width:11px;height:1px;background:repeating-linear-gradient(90deg,#a8a08c 0,#a8a08c 1px,transparent 1px,transparent 2px)"></div>
<svg style="left:43px;top:258px" width="16" height="13" viewBox="0 0 16 13" shape-rendering="crispEdges"><rect x="0" y="0" width="16" height="13" fill="#000"/><rect x="1" y="1" width="14" height="2" fill="#000080"/><rect x="1" y="3" width="14" height="9" fill="#808080"/><rect x="1" y="4" width="3" height="2" fill="#fff"/><rect x="5" y="4" width="3" height="2" fill="#fff"/><rect x="9" y="4" width="3" height="2" fill="#fff"/><rect x="13" y="4" width="2" height="2" fill="#fff"/><rect x="1" y="7" width="3" height="2" fill="#fff"/><rect x="5" y="7" width="3" height="2" fill="#fff"/><rect x="9" y="7" width="3" height="2" fill="#fff"/><rect x="13" y="7" width="2" height="2" fill="#fff"/><rect x="1" y="10" width="3" height="2" fill="#fff"/><rect x="5" y="10" width="3" height="2" fill="#fff"/><rect x="9" y="10" width="3" height="2" fill="#fff"/><rect x="13" y="10" width="2" height="2" fill="#fff"/></svg><div class="trow" style="top:256px;left:64px"><span class="ms">table_stadiums</span></div>
<div class="a" style="left:32px;top:280px;width:11px;height:1px;background:repeating-linear-gradient(90deg,#a8a08c 0,#a8a08c 1px,transparent 1px,transparent 2px)"></div>
<svg style="left:43px;top:274px" width="16" height="13" viewBox="0 0 16 13" shape-rendering="crispEdges"><rect x="0" y="0" width="16" height="13" fill="#fff"/><rect x="0.5" y="0.5" width="15" height="12" fill="none" stroke="#000" stroke-width="1" stroke-dasharray="1 1"/><path d="M1 1.5 H15" stroke="#0000c8" stroke-dasharray="1 1" fill="none"/><path d="M2 2.5 H15" stroke="#0000c8" stroke-dasharray="1 1" fill="none"/><path d="M1 2.5 H15" stroke="#000" stroke-dasharray="1 3" fill="none"/><path d="M2 3.5 H14" stroke="#909090" stroke-dasharray="1 1" fill="none"/><path d="M3 4.5 H14" stroke="#b0b0b0" stroke-dasharray="1 3" fill="none"/><path d="M2 6.5 H14" stroke="#909090" stroke-dasharray="1 1" fill="none"/><path d="M3 8.5 H14" stroke="#909090" stroke-dasharray="1 3" fill="none"/><path d="M2 9.5 H15" stroke="#a0a0a0" stroke-dasharray="1 1" fill="none"/><path d="M3 10.5 H14" stroke="#909090" stroke-dasharray="1 3" fill="none"/></svg><div class="trow" style="top:272px;left:64px"><span class="ms">table_store</span></div>
<div class="a" style="left:32px;top:296px;width:11px;height:1px;background:repeating-linear-gradient(90deg,#a8a08c 0,#a8a08c 1px,transparent 1px,transparent 2px)"></div>
<svg style="left:43px;top:290px" width="16" height="13" viewBox="0 0 16 13" shape-rendering="crispEdges"><rect x="0" y="0" width="16" height="13" fill="#fff"/><rect x="0.5" y="0.5" width="15" height="12" fill="none" stroke="#000" stroke-width="1" stroke-dasharray="1 1"/><path d="M1 1.5 H15" stroke="#0000c8" stroke-dasharray="1 1" fill="none"/><path d="M2 2.5 H15" stroke="#0000c8" stroke-dasharray="1 1" fill="none"/><path d="M1 2.5 H15" stroke="#000" stroke-dasharray="1 3" fill="none"/><path d="M2 3.5 H14" stroke="#909090" stroke-dasharray="1 1" fill="none"/><path d="M3 4.5 H14" stroke="#b0b0b0" stroke-dasharray="1 3" fill="none"/><path d="M2 6.5 H14" stroke="#909090" stroke-dasharray="1 1" fill="none"/><path d="M3 8.5 H14" stroke="#909090" stroke-dasharray="1 3" fill="none"/><path d="M2 9.5 H15" stroke="#a0a0a0" stroke-dasharray="1 1" fill="none"/><path d="M3 10.5 H14" stroke="#909090" stroke-dasharray="1 3" fill="none"/></svg><div class="trow" style="top:288px;left:64px"><span class="ms">table_team_lookup</span></div>
<div class="a" style="left:32px;top:312px;width:11px;height:1px;background:repeating-linear-gradient(90deg,#a8a08c 0,#a8a08c 1px,transparent 1px,transparent 2px)"></div>
<svg style="left:43px;top:306px" width="16" height="13" viewBox="0 0 16 13" shape-rendering="crispEdges"><rect x="0" y="0" width="16" height="13" fill="#fff"/><rect x="0.5" y="0.5" width="15" height="12" fill="none" stroke="#000" stroke-width="1" stroke-dasharray="1 1"/><path d="M1 1.5 H15" stroke="#0000c8" stroke-dasharray="1 1" fill="none"/><path d="M2 2.5 H15" stroke="#0000c8" stroke-dasharray="1 1" fill="none"/><path d="M1 2.5 H15" stroke="#000" stroke-dasharray="1 3" fill="none"/><path d="M2 3.5 H14" stroke="#909090" stroke-dasharray="1 1" fill="none"/><path d="M3 4.5 H14" stroke="#b0b0b0" stroke-dasharray="1 3" fill="none"/><path d="M2 6.5 H14" stroke="#909090" stroke-dasharray="1 1" fill="none"/><path d="M3 8.5 H14" stroke="#909090" stroke-dasharray="1 3" fill="none"/><path d="M2 9.5 H15" stroke="#a0a0a0" stroke-dasharray="1 1" fill="none"/><path d="M3 10.5 H14" stroke="#909090" stroke-dasharray="1 3" fill="none"/></svg><div class="trow" style="top:304px;left:64px"><span class="ms">table_team_manager</span></div>
<div class="a" style="left:32px;top:328px;width:11px;height:1px;background:repeating-linear-gradient(90deg,#a8a08c 0,#a8a08c 1px,transparent 1px,transparent 2px)"></div>
<svg style="left:43px;top:322px" width="16" height="13" viewBox="0 0 16 13" shape-rendering="crispEdges"><rect x="0" y="0" width="16" height="13" fill="#fff"/><rect x="0.5" y="0.5" width="15" height="12" fill="none" stroke="#000" stroke-width="1" stroke-dasharray="1 1"/><path d="M1 1.5 H15" stroke="#0000c8" stroke-dasharray="1 1" fill="none"/><path d="M2 2.5 H15" stroke="#0000c8" stroke-dasharray="1 1" fill="none"/><path d="M1 2.5 H15" stroke="#000" stroke-dasharray="1 3" fill="none"/><path d="M2 3.5 H14" stroke="#909090" stroke-dasharray="1 1" fill="none"/><path d="M3 4.5 H14" stroke="#b0b0b0" stroke-dasharray="1 3" fill="none"/><path d="M2 6.5 H14" stroke="#909090" stroke-dasharray="1 1" fill="none"/><path d="M3 8.5 H14" stroke="#909090" stroke-dasharray="1 3" fill="none"/><path d="M2 9.5 H15" stroke="#a0a0a0" stroke-dasharray="1 1" fill="none"/><path d="M3 10.5 H14" stroke="#909090" stroke-dasharray="1 3" fill="none"/></svg><div class="trow" style="top:320px;left:64px"><span class="ms">table_team_manager_history</span></div>
<div class="a" style="left:32px;top:344px;width:11px;height:1px;background:repeating-linear-gradient(90deg,#a8a08c 0,#a8a08c 1px,transparent 1px,transparent 2px)"></div>
<svg style="left:43px;top:338px" width="16" height="13" viewBox="0 0 16 13" shape-rendering="crispEdges"><rect x="0" y="0" width="16" height="13" fill="#000"/><rect x="1" y="1" width="14" height="2" fill="#000080"/><rect x="1" y="3" width="14" height="9" fill="#808080"/><rect x="1" y="4" width="3" height="2" fill="#fff"/><rect x="5" y="4" width="3" height="2" fill="#fff"/><rect x="9" y="4" width="3" height="2" fill="#fff"/><rect x="13" y="4" width="2" height="2" fill="#fff"/><rect x="1" y="7" width="3" height="2" fill="#fff"/><rect x="5" y="7" width="3" height="2" fill="#fff"/><rect x="9" y="7" width="3" height="2" fill="#fff"/><rect x="13" y="7" width="2" height="2" fill="#fff"/><rect x="1" y="10" width="3" height="2" fill="#fff"/><rect x="5" y="10" width="3" height="2" fill="#fff"/><rect x="9" y="10" width="3" height="2" fill="#fff"/><rect x="13" y="10" width="2" height="2" fill="#fff"/></svg>
<div class="a" style="left:62px;top:337px;width:157px;height:15px;background:#ece9d8"></div><div class="trow" style="top:336px;left:64px;font-weight:bold"><span class="ms" style="transform:scaleX(.94)">table_teamformationnames</span></div>
<div class="a" style="left:32px;top:360px;width:11px;height:1px;background:repeating-linear-gradient(90deg,#a8a08c 0,#a8a08c 1px,transparent 1px,transparent 2px)"></div>
<svg style="left:43px;top:354px" width="16" height="13" viewBox="0 0 16 13" shape-rendering="crispEdges"><rect x="0" y="0" width="16" height="13" fill="#fff"/><rect x="0.5" y="0.5" width="15" height="12" fill="none" stroke="#000" stroke-width="1" stroke-dasharray="1 1"/><path d="M1 1.5 H15" stroke="#0000c8" stroke-dasharray="1 1" fill="none"/><path d="M2 2.5 H15" stroke="#0000c8" stroke-dasharray="1 1" fill="none"/><path d="M1 2.5 H15" stroke="#000" stroke-dasharray="1 3" fill="none"/><path d="M2 3.5 H14" stroke="#909090" stroke-dasharray="1 1" fill="none"/><path d="M3 4.5 H14" stroke="#b0b0b0" stroke-dasharray="1 3" fill="none"/><path d="M2 6.5 H14" stroke="#909090" stroke-dasharray="1 1" fill="none"/><path d="M3 8.5 H14" stroke="#909090" stroke-dasharray="1 3" fill="none"/><path d="M2 9.5 H15" stroke="#a0a0a0" stroke-dasharray="1 1" fill="none"/><path d="M3 10.5 H14" stroke="#909090" stroke-dasharray="1 3" fill="none"/></svg><div class="trow" style="top:352px;left:64px"><span class="ms">table_teamkits</span></div>
<div class="a" style="left:32px;top:376px;width:11px;height:1px;background:repeating-linear-gradient(90deg,#a8a08c 0,#a8a08c 1px,transparent 1px,transparent 2px)"></div>
<svg style="left:43px;top:370px" width="16" height="13" viewBox="0 0 16 13" shape-rendering="crispEdges"><rect x="0" y="0" width="16" height="13" fill="#fff"/><rect x="0.5" y="0.5" width="15" height="12" fill="none" stroke="#000" stroke-width="1" stroke-dasharray="1 1"/><path d="M1 1.5 H15" stroke="#0000c8" stroke-dasharray="1 1" fill="none"/><path d="M2 2.5 H15" stroke="#0000c8" stroke-dasharray="1 1" fill="none"/><path d="M1 2.5 H15" stroke="#000" stroke-dasharray="1 3" fill="none"/><path d="M2 3.5 H14" stroke="#909090" stroke-dasharray="1 1" fill="none"/><path d="M3 4.5 H14" stroke="#b0b0b0" stroke-dasharray="1 3" fill="none"/><path d="M2 6.5 H14" stroke="#909090" stroke-dasharray="1 1" fill="none"/><path d="M3 8.5 H14" stroke="#909090" stroke-dasharray="1 3" fill="none"/><path d="M2 9.5 H15" stroke="#a0a0a0" stroke-dasharray="1 1" fill="none"/><path d="M3 10.5 H14" stroke="#909090" stroke-dasharray="1 3" fill="none"/></svg><div class="trow" style="top:368px;left:64px"><span class="ms">table_teamplayerlinks</span></div>
<div class="a" style="left:32px;top:392px;width:11px;height:1px;background:repeating-linear-gradient(90deg,#a8a08c 0,#a8a08c 1px,transparent 1px,transparent 2px)"></div>
<svg style="left:43px;top:386px" width="16" height="13" viewBox="0 0 16 13" shape-rendering="crispEdges"><rect x="0" y="0" width="16" height="13" fill="#fff"/><rect x="0.5" y="0.5" width="15" height="12" fill="none" stroke="#000" stroke-width="1" stroke-dasharray="1 1"/><path d="M1 1.5 H15" stroke="#0000c8" stroke-dasharray="1 1" fill="none"/><path d="M2 2.5 H15" stroke="#0000c8" stroke-dasharray="1 1" fill="none"/><path d="M1 2.5 H15" stroke="#000" stroke-dasharray="1 3" fill="none"/><path d="M2 3.5 H14" stroke="#909090" stroke-dasharray="1 1" fill="none"/><path d="M3 4.5 H14" stroke="#b0b0b0" stroke-dasharray="1 3" fill="none"/><path d="M2 6.5 H14" stroke="#909090" stroke-dasharray="1 1" fill="none"/><path d="M3 8.5 H14" stroke="#909090" stroke-dasharray="1 3" fill="none"/><path d="M2 9.5 H15" stroke="#a0a0a0" stroke-dasharray="1 1" fill="none"/><path d="M3 10.5 H14" stroke="#909090" stroke-dasharray="1 3" fill="none"/></svg><div class="trow" style="top:384px;left:64px"><span class="ms">table_teamrivalry</span></div>
<div class="a" style="left:32px;top:408px;width:11px;height:1px;background:repeating-linear-gradient(90deg,#a8a08c 0,#a8a08c 1px,transparent 1px,transparent 2px)"></div>
<svg style="left:43px;top:402px" width="16" height="13" viewBox="0 0 16 13" shape-rendering="crispEdges"><rect x="0" y="0" width="16" height="13" fill="#fff"/><rect x="0.5" y="0.5" width="15" height="12" fill="none" stroke="#000" stroke-width="1" stroke-dasharray="1 1"/><path d="M1 1.5 H15" stroke="#0000c8" stroke-dasharray="1 1" fill="none"/><path d="M2 2.5 H15" stroke="#0000c8" stroke-dasharray="1 1" fill="none"/><path d="M1 2.5 H15" stroke="#000" stroke-dasharray="1 3" fill="none"/><path d="M2 3.5 H14" stroke="#909090" stroke-dasharray="1 1" fill="none"/><path d="M3 4.5 H14" stroke="#b0b0b0" stroke-dasharray="1 3" fill="none"/><path d="M2 6.5 H14" stroke="#909090" stroke-dasharray="1 1" fill="none"/><path d="M3 8.5 H14" stroke="#909090" stroke-dasharray="1 3" fill="none"/><path d="M2 9.5 H15" stroke="#a0a0a0" stroke-dasharray="1 1" fill="none"/><path d="M3 10.5 H14" stroke="#909090" stroke-dasharray="1 3" fill="none"/></svg><div class="trow" style="top:400px;left:64px"><span class="ms">table_teams</span></div>
<div class="a" style="left:32px;top:424px;width:11px;height:1px;background:repeating-linear-gradient(90deg,#a8a08c 0,#a8a08c 1px,transparent 1px,transparent 2px)"></div>
<svg style="left:43px;top:418px" width="16" height="13" viewBox="0 0 16 13" shape-rendering="crispEdges"><rect x="0" y="0" width="16" height="13" fill="#fff"/><rect x="0.5" y="0.5" width="15" height="12" fill="none" stroke="#000" stroke-width="1" stroke-dasharray="1 1"/><path d="M1 1.5 H15" stroke="#0000c8" stroke-dasharray="1 1" fill="none"/><path d="M2 2.5 H15" stroke="#0000c8" stroke-dasharray="1 1" fill="none"/><path d="M1 2.5 H15" stroke="#000" stroke-dasharray="1 3" fill="none"/><path d="M2 3.5 H14" stroke="#909090" stroke-dasharray="1 1" fill="none"/><path d="M3 4.5 H14" stroke="#b0b0b0" stroke-dasharray="1 3" fill="none"/><path d="M2 6.5 H14" stroke="#909090" stroke-dasharray="1 1" fill="none"/><path d="M3 8.5 H14" stroke="#909090" stroke-dasharray="1 3" fill="none"/><path d="M2 9.5 H15" stroke="#a0a0a0" stroke-dasharray="1 1" fill="none"/><path d="M3 10.5 H14" stroke="#909090" stroke-dasharray="1 3" fill="none"/></svg><div class="trow" style="top:416px;left:64px"><span class="ms">table_transactionhistory</span></div>
<svg style="left:9px;top:436px" width="9" height="9" viewBox="0 0 9 9" shape-rendering="crispEdges"><rect x="0.5" y="0.5" width="8" height="8" rx="1" fill="#fff" stroke="#7898b5"/><rect x="1" y="5" width="7" height="3" fill="#dcdacc"/><rect x="1" y="3" width="7" height="2" fill="#f2f1ea"/><rect x="2" y="4" width="5" height="1" fill="#000"/><rect x="4" y="2" width="1" height="5" fill="#000"/></svg>
<svg style="left:24px;top:433px" width="16" height="13" viewBox="0 0 16 13" shape-rendering="crispEdges"><path d="M1.5 11.5 V2.5 L3 0.5 H7 L8.5 2.5 H13.5 V11.5 Z" fill="#f3ef78" stroke="#b4b07c" stroke-width="1"/></svg><div class="trow" style="top:432px;left:45px"><span class="ms">System Tables</span></div>
<svg style="left:5px;top:450px" width="17" height="14" viewBox="0 0 17 14" shape-rendering="crispEdges"><path d="M2 0.5 H15 L16.5 2 V6 L15 7.5 H2 L0.5 6 V2 Z" fill="#c8c8c8" stroke="#909090" stroke-width="1" shape-rendering="auto"/><rect x="2" y="1" width="13" height="2" fill="#f0f0f0"/><rect x="2" y="3" width="13" height="1" fill="#d8d8d8"/><rect x="1" y="5" width="15" height="2" fill="#787878"/><rect x="2" y="7" width="13" height="1" fill="#404040"/><rect x="12" y="3" width="2" height="1" fill="#00d000"/><rect x="7" y="8" width="3" height="1" fill="#404040"/><rect x="8" y="9" width="1" height="2" fill="#000"/><rect x="0" y="11" width="17" height="1" fill="#000"/><rect x="7" y="10" width="3" height="3" fill="#d8c820"/><rect x="8" y="11" width="1" height="1" fill="#fff8a0"/></svg><div class="trow" style="top:448px;left:26px"><span class="ms" style="word-spacing:1.1px">Scribbling-block</span></div>
<svg style="left:24px;top:466px" width="16" height="13" viewBox="0 0 16 13" shape-rendering="crispEdges"><rect x="0" y="0" width="16" height="13" fill="#fff"/><rect x="0.5" y="0.5" width="15" height="12" fill="none" stroke="#000" stroke-width="1" stroke-dasharray="1 1"/><path d="M1 1.5 H15" stroke="#0000c8" stroke-dasharray="1 1" fill="none"/><path d="M2 2.5 H15" stroke="#0000c8" stroke-dasharray="1 1" fill="none"/><path d="M1 2.5 H15" stroke="#000" stroke-dasharray="1 3" fill="none"/><path d="M2 3.5 H14" stroke="#909090" stroke-dasharray="1 1" fill="none"/><path d="M3 4.5 H14" stroke="#b0b0b0" stroke-dasharray="1 3" fill="none"/><path d="M2 6.5 H14" stroke="#909090" stroke-dasharray="1 1" fill="none"/><path d="M3 8.5 H14" stroke="#909090" stroke-dasharray="1 3" fill="none"/><path d="M2 9.5 H15" stroke="#a0a0a0" stroke-dasharray="1 1" fill="none"/><path d="M3 10.5 H14" stroke="#909090" stroke-dasharray="1 3" fill="none"/></svg><div class="trow" style="top:464px;left:45px"><span class="ms">table_teams</span></div></div><div class="a sb" style="left:6px;top:590px;width:251px;height:17px"></div><div class="sbtn" style="left:6px;top:591px;width:16px;height:15px"></div>
<svg style="left:6.5px;top:591px" width="15" height="15" viewBox="0 0 15 15"><path d="M9 4 L5.5 7.5 L9 11" fill="none" stroke="#4d6185" stroke-width="2.2"/></svg><div class="sbtn" style="left:240px;top:591px;width:16px;height:15px"></div>
<svg style="left:240.5px;top:591px" width="15" height="15" viewBox="0 0 15 15"><path d="M6 4 L9.5 7.5 L6 11" fill="none" stroke="#4d6185" stroke-width="2.2"/></svg><div class="thumbh" style="left:35px;top:591px;width:139px;height:15px"></div>
<div class="a" style="left:100px;top:595px;width:8px;height:7px;background:repeating-linear-gradient(90deg,#8ea5e6 0,#8ea5e6 1px,#eef3ff 1px,#eef3ff 2px)"></div>
<div class="a" style="left:264px;top:74px;width:678px;height:492px;border-top:1px solid #aca899;border-left:1px solid #aca899;background:#ece9d8"></div>
<div class="a" style="left:265px;top:75px;width:677px;height:491px;border-top:1px solid #716f64;border-left:1px solid #716f64"></div>
<div class="a" id="mdi" style="left:266px;top:76px;width:657px;height:472px;background:#808080;overflow:hidden">
<div class="a" style="left:0px;top:0px;width:401px;height:242px;background:#7189de;border-radius:7px 7px 0 0;"></div>
<div class="a" style="left:0px;top:0px;width:401px;height:30px;background:linear-gradient(#7e98e0 0,#93abea 2px,#839ee4 5px,#7a96df 10px,#7a96df 20px,#819de6 26px,#7c98e0 30px);border-radius:7px 7px 0 0;"></div>
<svg style="left:5px;top:10px" width="16" height="13" viewBox="0 0 16 13" shape-rendering="crispEdges"><rect x="0" y="0" width="16" height="13" fill="#000"/><rect x="1" y="1" width="14" height="2" fill="#000080"/><rect x="1" y="3" width="14" height="9" fill="#808080"/><rect x="1" y="4" width="3" height="2" fill="#fff"/><rect x="5" y="4" width="3" height="2" fill="#fff"/><rect x="9" y="4" width="3" height="2" fill="#fff"/><rect x="13" y="4" width="2" height="2" fill="#fff"/><rect x="1" y="7" width="3" height="2" fill="#fff"/><rect x="5" y="7" width="3" height="2" fill="#fff"/><rect x="9" y="7" width="3" height="2" fill="#fff"/><rect x="13" y="7" width="2" height="2" fill="#fff"/><rect x="1" y="10" width="3" height="2" fill="#fff"/><rect x="5" y="10" width="3" height="2" fill="#fff"/><rect x="9" y="10" width="3" height="2" fill="#fff"/><rect x="13" y="10" width="2" height="2" fill="#fff"/></svg><div class="t" style="left:26px;top:9.5px;font-weight:bold;font-size:13.5px;line-height:16px;color:#d8e4f8;letter-spacing:-.33px;">table_coloridtorgb</div><div class="cb" style="left:329px;top:6px"></div>
<div class="a" style="left:333px;top:19px;width:7px;height:3px;background:#fff"></div><div class="cb" style="left:352px;top:6px"></div>
<div class="a" style="left:356px;top:11px;width:11px;height:11px;border:1px solid #fff;border-top-width:3px"></div><div class="cb cl" style="left:375px;top:6px"></div>
<svg style="left:375px;top:6px" width="20" height="20" viewBox="0 0 20 20"><path d="M5 5 L15 15.5 M15 5 L5 15.5" stroke="#fff" stroke-width="2.3" fill="none"/></svg>
<div class="a" style="left:3px;top:30px;width:394px;height:179px;background:#808080;border-top:2px solid #8f8c7c;border-left:2px solid #8f8c7c"></div>
<div class="a" style="left:5px;top:32px;width:284px;height:177px;overflow:hidden"><div class="hc" style="left:0;top:0;width:16px"></div><div class="hc r" style="left:16px;top:0;width:67px"><span class="msr">colorid</span></div><div class="hc r" style="left:83px;top:0;width:67px"><span class="msr">blue</span></div><div class="hc r" style="left:150px;top:0;width:67px"><span class="msr">green</span></div><div class="hc r" style="left:217px;top:0;width:67px"><span class="msr">red</span></div><div class="hc" style="left:0;top:16px;width:16px"></div>
<svg style="left:5px;top:19px" width="6" height="9" viewBox="0 0 6 9"><path d="M0 0 L5.5 4.5 L0 9 Z" fill="#000"/></svg><div class="dc r" style="left:16px;top:16px;width:67px"><span class="msr">13</span></div><div class="dc r" style="left:83px;top:16px;width:67px"><span class="msr">59</span></div><div class="dc r" style="left:150px;top:16px;width:67px"><span class="msr">127</span></div><div class="dc r" style="left:217px;top:16px;width:67px"><span class="msr">222</span></div><div class="hc" style="left:0;top:32px;width:16px"></div><div class="dc r" style="left:16px;top:32px;width:67px"><span class="msr">14</span></div><div class="dc r" style="left:83px;top:32px;width:67px"><span class="msr">47</span></div><div class="dc r" style="left:150px;top:32px;width:67px"><span class="msr">108</span></div><div class="dc r" style="left:217px;top:32px;width:67px"><span class="msr">227</span></div><div class="hc" style="left:0;top:48px;width:16px"></div><div class="dc r" style="left:16px;top:48px;width:67px"><span class="msr">15</span></div><div class="dc r" style="left:83px;top:48px;width:67px"><span class="msr">23</span></div><div class="dc r" style="left:150px;top:48px;width:67px"><span class="msr">76</span></div><div class="dc r" style="left:217px;top:48px;width:67px"><span class="msr">197</span></div><div class="hc" style="left:0;top:64px;width:16px"></div><div class="dc r" style="left:16px;top:64px;width:67px"><span class="msr">16</span></div><div class="dc r" style="left:83px;top:64px;width:67px"><span class="msr">64</span></div><div class="dc r" style="left:150px;top:64px;width:67px"><span class="msr">78</span></div><div class="dc r" style="left:217px;top:64px;width:67px"><span class="msr">221</span></div><div class="hc" style="left:0;top:80px;width:16px"></div><div class="dc r" style="left:16px;top:80px;width:67px"><span class="msr">17</span></div><div class="dc r" style="left:83px;top:80px;width:67px"><span class="msr">41</span></div><div class="dc r" style="left:150px;top:80px;width:67px"><span class="msr">57</span></div><div class="dc r" style="left:217px;top:80px;width:67px"><span class="msr">196</span></div><div class="hc" style="left:0;top:96px;width:16px"></div><div class="dc r" style="left:16px;top:96px;width:67px"><span class="msr">18</span></div><div class="dc r" style="left:83px;top:96px;width:67px"><span class="msr">44</span></div><div class="dc r" style="left:150px;top:96px;width:67px"><span class="msr">23</span></div><div class="dc r" style="left:217px;top:96px;width:67px"><span class="msr">150</span></div><div class="hc" style="left:0;top:112px;width:16px"></div><div class="dc r" style="left:16px;top:112px;width:67px"><span class="msr">19</span></div><div class="dc r" style="left:83px;top:112px;width:67px"><span class="msr">49</span></div><div class="dc r" style="left:150px;top:112px;width:67px"><span class="msr">60</span></div><div class="dc r" style="left:217px;top:112px;width:67px"><span class="msr">238</span></div><div class="hc" style="left:0;top:128px;width:16px"></div><div class="dc r" style="left:16px;top:128px;width:67px"><span class="msr">20</span></div><div class="dc r" style="left:83px;top:128px;width:67px"><span class="msr">42</span></div><div class="dc r" style="left:150px;top:128px;width:67px"><span class="msr">42</span></div><div class="dc r" style="left:217px;top:128px;width:67px"><span class="msr">220</span></div><div class="hc" style="left:0;top:144px;width:16px"></div><div class="dc r" style="left:16px;top:144px;width:67px"><span class="msr">21</span></div><div class="dc r" style="left:83px;top:144px;width:67px"><span class="msr">55</span></div><div class="dc r" style="left:150px;top:144px;width:67px"><span class="msr">28</span></div><div class="dc r" style="left:217px;top:144px;width:67px"><span class="msr">189</span></div><div class="hc" style="left:0;top:160px;width:16px"></div><div class="dc r" style="left:16px;top:160px;width:67px"><span class="msr">22</span></div><div class="dc r" style="left:83px;top:160px;width:67px"><span class="msr">55</span></div><div class="dc r" style="left:150px;top:160px;width:67px"><span class="msr">27</span></div><div class="dc r" style="left:217px;top:160px;width:67px"><span class="msr">181</span></div></div><div class="a sb" style="left:378px;top:31px;width:17px;height:178px"></div><div class="sbtn" style="left:379px;top:32px;width:15px;height:16px"></div>
<svg style="left:379px;top:32.5px" width="15" height="15" viewBox="0 0 15 15"><path d="M4 9 L7.5 5.5 L11 9" fill="none" stroke="#4d6185" stroke-width="2.2"/></svg><div class="sbtn" style="left:379px;top:192px;width:15px;height:16px"></div>
<svg style="left:379px;top:192.5px" width="15" height="15" viewBox="0 0 15 15"><path d="M4 6 L7.5 9.5 L11 6" fill="none" stroke="#4d6185" stroke-width="2.2"/></svg><div class="thumbv" style="left:379px;top:76px;width:15px;height:20px"></div>
<div class="a" style="left:383px;top:82px;width:7px;height:8px;background:repeating-linear-gradient(180deg,#eef3ff 0,#eef3ff 1px,#8ea5e6 1px,#8ea5e6 2px)"></div>
<div class="a" style="left:3px;top:209px;width:394px;height:29px;background:#ece9d8"></div>
<svg style="left:9px;top:217px" width="14" height="13" viewBox="0 0 14 13" shape-rendering="crispEdges"><rect x="0.5" y="0.5" width="5" height="2" fill="#fff" stroke="#000"/><rect x="0.5" y="4.5" width="5" height="2" fill="#fff" stroke="#000"/><rect x="0.5" y="8.5" width="5" height="2" fill="#fff" stroke="#000"/><rect x="0" y="12" width="7" height="1" fill="#000"/><rect x="8.5" y="0.5" width="2" height="2" fill="#fff" stroke="#000"/><rect x="9.5" y="4.5" width="3" height="2" fill="#fff" stroke="#000"/></svg>
<div class="a" style="left:27px;top:213px;width:22px;height:21px;background:#fff;border:1px solid #98b0d8;border-radius:3px"></div>
<svg style="left:30.5px;top:215px" width="15" height="16" viewBox="0 0 15 16" shape-rendering="crispEdges"><rect x="0" y="0" width="15" height="16" fill="#000"/><rect x="1" y="2" width="13" height="11" fill="#fff"/><rect x="4" y="2" width="1" height="11" fill="#000"/><rect x="9" y="2" width="1" height="11" fill="#000"/><rect x="1" y="4" width="13" height="1" fill="#000"/><rect x="1" y="7" width="13" height="1" fill="#000"/><rect x="1" y="10" width="13" height="1" fill="#000"/><rect x="2" y="14" width="1" height="1" fill="#fff"/><rect x="4" y="14" width="2" height="1" fill="#fff"/><rect x="7" y="14" width="6" height="1" fill="#fff"/></svg>
<svg style="left:61px;top:218px" width="16" height="10" viewBox="0 0 16 10"><path d="M0 0 L5.5 5 L0 10 Z" fill="#000"/><path d="M11 1.5 V8.5 M8 3 L14 7 M14 3 L8 7" stroke="#000" stroke-width="1.1" fill="none"/></svg>
<svg style="left:84px;top:217px" width="14" height="12" viewBox="0 0 14 12"><path d="M0 1 L4.5 6 L0 11 Z" fill="#000"/><path d="M3.5 0.5 L13.5 11.5 M12.5 0.5 L4.5 11.5" stroke="#000" stroke-width="1.5" fill="none"/></svg>
<svg style="left:107px;top:218px" width="14" height="11" viewBox="0 0 14 11"><path d="M3.5 5.5 Q7 1.5 10.5 3.5 Q13.5 6 10 10" stroke="#fff" stroke-width="1.2" fill="none"/><path d="M1 7.5 L2 2.5 L6.5 6 Z" fill="#fff"/><path d="M2.5 4.5 Q6 0.5 9.5 2.5 Q12.5 5 9 9" stroke="#aca899" stroke-width="1.2" fill="none"/><path d="M0 6.5 L1 1.5 L5.5 5 Z" fill="#aca899"/></svg>
<svg style="left:135px;top:217px" width="15" height="13" viewBox="0 0 15 13"><path d="M1 1 H14 L9 7 V12 L6 10.5 V7 Z" fill="none" stroke="#000" stroke-width="1.7" stroke-linejoin="miter"/></svg>
<svg style="left:155.5px;top:217px" width="16" height="13" viewBox="0 0 16 13" shape-rendering="crispEdges"><path d="M3 0 H6 V3 H7 V5 H9 V3 H10 V0 H13 V3 L16 9 V13 H10 V8 H6 V13 H0 V9 L3 3 Z" fill="#000"/><rect x="2" y="9" width="1" height="3" fill="#fff"/><rect x="11" y="9" width="1" height="3" fill="#fff"/><rect x="4" y="4" width="1" height="3" fill="#fff"/><rect x="12" y="4" width="1" height="3" fill="#fff"/></svg>
<svg style="left:179px;top:217px" width="13" height="13" viewBox="0 0 13 13"><path d="M4.5 1.5 Q1 4 1.8 8 Q2.2 10 4 11.5" stroke="#000" stroke-width="2" fill="none"/><path d="M8.5 11.5 Q12 9 11.2 5 Q10.8 3 9 1.5" stroke="#000" stroke-width="2" fill="none"/><path d="M2.5 0 H6.5 V4 Z" fill="#000"/><path d="M10.5 13 H6.5 V9 Z" fill="#000"/></svg>
<svg style="left:384px;top:225px" width="12" height="12" viewBox="0 0 12 12" shape-rendering="crispEdges"><rect x="8" y="0" width="2" height="2" fill="#c4c0ac"/><rect x="9" y="1" width="1" height="1" fill="#fff"/><rect x="4" y="4" width="2" height="2" fill="#c4c0ac"/><rect x="5" y="5" width="1" height="1" fill="#fff"/><rect x="8" y="4" width="2" height="2" fill="#c4c0ac"/><rect x="9" y="5" width="1" height="1" fill="#fff"/><rect x="0" y="8" width="2" height="2" fill="#c4c0ac"/><rect x="1" y="9" width="1" height="1" fill="#fff"/><rect x="4" y="8" width="2" height="2" fill="#c4c0ac"/><rect x="5" y="9" width="1" height="1" fill="#fff"/><rect x="8" y="8" width="2" height="2" fill="#c4c0ac"/><rect x="9" y="9" width="1" height="1" fill="#fff"/></svg>
<div class="a" style="left:1px;top:238px;width:403px;height:300px;background:#7189de;border-radius:7px 7px 0 0;"></div>
<div class="a" style="left:1px;top:238px;width:403px;height:31px;background:linear-gradient(#7e98e0 0,#93abea 2px,#839ee4 5px,#7a96df 10px,#7a96df 20px,#819de6 26px,#7c98e0 30px);border-radius:7px 7px 0 0;"></div>
<svg style="left:7px;top:249px" width="16" height="13" viewBox="0 0 16 13" shape-rendering="crispEdges"><rect x="0" y="0" width="16" height="13" fill="#000"/><rect x="1" y="1" width="14" height="2" fill="#000080"/><rect x="1" y="3" width="14" height="9" fill="#808080"/><rect x="1" y="4" width="3" height="2" fill="#fff"/><rect x="5" y="4" width="3" height="2" fill="#fff"/><rect x="9" y="4" width="3" height="2" fill="#fff"/><rect x="13" y="4" width="2" height="2" fill="#fff"/><rect x="1" y="7" width="3" height="2" fill="#fff"/><rect x="5" y="7" width="3" height="2" fill="#fff"/><rect x="9" y="7" width="3" height="2" fill="#fff"/><rect x="13" y="7" width="2" height="2" fill="#fff"/><rect x="1" y="10" width="3" height="2" fill="#fff"/><rect x="5" y="10" width="3" height="2" fill="#fff"/><rect x="9" y="10" width="3" height="2" fill="#fff"/><rect x="13" y="10" width="2" height="2" fill="#fff"/></svg><div class="t" style="left:27px;top:248.5px;font-weight:bold;font-size:13.5px;line-height:16px;color:#d8e4f8;letter-spacing:-.33px;">table_stadiums</div><div class="cb" style="left:331px;top:244px"></div>
<div class="a" style="left:335px;top:257px;width:7px;height:3px;background:#fff"></div><div class="cb" style="left:354px;top:244px"></div>
<div class="a" style="left:358px;top:249px;width:11px;height:11px;border:1px solid #fff;border-top-width:3px"></div><div class="cb cl" style="left:377px;top:244px"></div>
<svg style="left:377px;top:244px" width="20" height="20" viewBox="0 0 20 20"><path d="M5 5 L15 15.5 M15 5 L5 15.5" stroke="#fff" stroke-width="2.3" fill="none"/></svg>
<div class="a" style="left:5px;top:269px;width:394px;height:260px;background:#fff;border-top:2px solid #8f8c7c;border-left:2px solid #8f8c7c"></div>
<div class="a" style="left:7px;top:271px;width:351px;height:210px;overflow:hidden"><div class="hc" style="left:0;top:0;width:16px"></div><div class="hc r" style="left:16px;top:0;width:67px"><span class="msr">stadiumid</span></div><div class="hc l" style="left:83px;top:0;width:67px"><span class="ms">name</span></div><div class="hc r" style="left:150px;top:0;width:67px"><span class="msr">capacity</span></div><div class="hc r" style="left:217px;top:0;width:67px"><span class="msr">hometeamid</span></div><div class="hc r" style="left:284px;top:0;width:67px"><span class="msr">stadiumtype</span></div><div class="hc" style="left:0;top:16px;width:16px"></div>
<svg style="left:5px;top:19px" width="6" height="9" viewBox="0 0 6 9"><path d="M0 0 L5.5 4.5 L0 9 Z" fill="#000"/></svg><div class="dc r" style="left:16px;top:16px;width:67px"><span class="msr">1</span></div><div class="dc l" style="left:83px;top:16px;width:67px"><span class="ms">Old Trafford</span></div><div class="dc r" style="left:150px;top:16px;width:67px"><span class="msr">68174</span></div><div class="dc r" style="left:217px;top:16px;width:67px"><span class="msr">11</span></div><div class="dc r" style="left:284px;top:16px;width:67px"><span class="msr">0</span></div><div class="hc" style="left:0;top:32px;width:16px"></div><div class="dc r" style="left:16px;top:32px;width:67px"><span class="msr">2</span></div><div class="dc l" style="left:83px;top:32px;width:67px"><span class="ms">Bernabeau</span></div><div class="dc r" style="left:150px;top:32px;width:67px"><span class="msr">80000</span></div><div class="dc r" style="left:217px;top:32px;width:67px"><span class="msr">243</span></div><div class="dc r" style="left:284px;top:32px;width:67px"><span class="msr">0</span></div><div class="hc" style="left:0;top:48px;width:16px"></div><div class="dc r" style="left:16px;top:48px;width:67px"><span class="msr">4</span></div><div class="dc l" style="left:83px;top:48px;width:67px"><span class="ms">Gerland</span></div><div class="dc r" style="left:150px;top:48px;width:67px"><span class="msr">41184</span></div><div class="dc r" style="left:217px;top:48px;width:67px"><span class="msr">66</span></div><div class="dc r" style="left:284px;top:48px;width:67px"><span class="msr">0</span></div><div class="hc" style="left:0;top:64px;width:16px"></div><div class="dc r" style="left:16px;top:64px;width:67px"><span class="msr">5</span></div><div class="dc l" style="left:83px;top:64px;width:67px"><span class="ms">San Siro</span></div><div class="dc r" style="left:150px;top:64px;width:67px"><span class="msr">85700</span></div><div class="dc r" style="left:217px;top:64px;width:67px"><span class="msr">47</span></div><div class="dc r" style="left:284px;top:64px;width:67px"><span class="msr">0</span></div><div class="hc" style="left:0;top:80px;width:16px"></div><div class="dc r" style="left:16px;top:80px;width:67px"><span class="msr">6</span></div><div class="dc l" style="left:83px;top:80px;width:67px"><span class="ms">Camp Nou</span></div><div class="dc r" style="left:150px;top:80px;width:67px"><span class="msr">98600</span></div><div class="dc r" style="left:217px;top:80px;width:67px"><span class="msr">241</span></div><div class="dc r" style="left:284px;top:80px;width:67px"><span class="msr">0</span></div><div class="hc" style="left:0;top:96px;width:16px"></div><div class="dc r" style="left:16px;top:96px;width:67px"><span class="msr">7</span></div><div class="dc l" style="left:83px;top:96px;width:67px"><span class="ms">Highbury</span></div><div class="dc r" style="left:150px;top:96px;width:67px"><span class="msr">38500</span></div><div class="dc r" style="left:217px;top:96px;width:67px"><span class="msr">1</span></div><div class="dc r" style="left:284px;top:96px;width:67px"><span class="msr">0</span></div><div class="hc" style="left:0;top:112px;width:16px"></div><div class="dc r" style="left:16px;top:112px;width:67px"><span class="msr">8</span></div><div class="dc l" style="left:83px;top:112px;width:67px"><span class="ms">Alpi</span></div><div class="dc r" style="left:150px;top:112px;width:67px"><span class="msr">71012</span></div><div class="dc r" style="left:217px;top:112px;width:67px"><span class="msr">45</span></div><div class="dc r" style="left:284px;top:112px;width:67px"><span class="msr">0</span></div><div class="hc" style="left:0;top:128px;width:16px"></div><div class="dc r" style="left:16px;top:128px;width:67px"><span class="msr">9</span></div><div class="dc l" style="left:83px;top:128px;width:67px"><span class="ms">Westfalen</span></div><div class="dc r" style="left:150px;top:128px;width:67px"><span class="msr">82678</span></div><div class="dc r" style="left:217px;top:128px;width:67px"><span class="msr">22</span></div><div class="dc r" style="left:284px;top:128px;width:67px"><span class="msr">0</span></div><div class="hc" style="left:0;top:144px;width:16px"></div><div class="dc r" style="left:16px;top:144px;width:67px"><span class="msr">10</span></div><div class="dc l" style="left:83px;top:144px;width:67px"><span class="ms">Mestalla</span></div><div class="dc r" style="left:150px;top:144px;width:67px"><span class="msr">53000</span></div><div class="dc r" style="left:217px;top:144px;width:67px"><span class="msr">461</span></div><div class="dc r" style="left:284px;top:144px;width:67px"><span class="msr">0</span></div><div class="hc" style="left:0;top:160px;width:16px"></div><div class="dc r" style="left:16px;top:160px;width:67px"><span class="msr">12</span></div><div class="dc l" style="left:83px;top:160px;width:67px"><span class="ms">BayArena</span></div><div class="dc r" style="left:150px;top:160px;width:67px"><span class="msr">22500</span></div><div class="dc r" style="left:217px;top:160px;width:67px"><span class="msr">32</span></div><div class="dc r" style="left:284px;top:160px;width:67px"><span class="msr">0</span></div><div class="hc" style="left:0;top:176px;width:16px"></div><div class="dc r" style="left:16px;top:176px;width:67px"><span class="msr">13</span></div><div class="dc l" style="left:83px;top:176px;width:67px"><span class="ms">Anfield</span></div><div class="dc r" style="left:150px;top:176px;width:67px"><span class="msr">45400</span></div><div class="dc r" style="left:217px;top:176px;width:67px"><span class="msr">9</span></div><div class="dc r" style="left:284px;top:176px;width:67px"><span class="msr">0</span></div><div class="hc" style="left:0;top:192px;width:16px"></div><div class="dc r" style="left:16px;top:192px;width:67px"><span class="msr">14</span></div><div class="dc l" style="left:83px;top:192px;width:67px"><span class="ms">Princes</span></div><div class="dc r" style="left:150px;top:192px;width:67px"><span class="msr">48712</span></div><div class="dc r" style="left:217px;top:192px;width:67px"><span class="msr">73</span></div><div class="dc r" style="left:284px;top:192px;width:67px"><span class="msr">0</span></div></div><div class="hc" style="left:358px;top:271px;width:23px;border-right:none"></div><div class="dc" style="left:358px;top:287px;width:23px;border-right:none"></div><div class="dc" style="left:358px;top:303px;width:23px;border-right:none"></div><div class="dc" style="left:358px;top:319px;width:23px;border-right:none"></div><div class="dc" style="left:358px;top:335px;width:23px;border-right:none"></div><div class="dc" style="left:358px;top:351px;width:23px;border-right:none"></div><div class="dc" style="left:358px;top:367px;width:23px;border-right:none"></div><div class="dc" style="left:358px;top:383px;width:23px;border-right:none"></div><div class="dc" style="left:358px;top:399px;width:23px;border-right:none"></div><div class="dc" style="left:358px;top:415px;width:23px;border-right:none"></div><div class="dc" style="left:358px;top:431px;width:23px;border-right:none"></div><div class="dc" style="left:358px;top:447px;width:23px;border-right:none"></div><div class="dc" style="left:358px;top:463px;width:23px;border-right:none"></div><div class="a sb" style="left:380px;top:270px;width:17px;height:261px"></div><div class="sbtn" style="left:381px;top:271px;width:15px;height:16px"></div>
<svg style="left:381px;top:271.5px" width="15" height="15" viewBox="0 0 15 15"><path d="M4 9 L7.5 5.5 L11 9" fill="none" stroke="#4d6185" stroke-width="2.2"/></svg><div class="thumbv" style="left:381px;top:288px;width:15px;height:105px"></div>
<div class="a" style="left:385px;top:336px;width:7px;height:8px;background:repeating-linear-gradient(180deg,#eef3ff 0,#eef3ff 1px,#8ea5e6 1px,#8ea5e6 2px)"></div>
<div class="a" style="left:401px;top:-3px;width:300px;height:344px;background:#0855e4;"></div>
<div class="a" style="left:401px;top:-3px;width:300px;height:30px;background:linear-gradient(#0a58de 0,#3a8cff 1.5px,#2a80fc 2.5px,#0d64f0 4px,#0058e6 6px,#0058e6 15px,#0560ee 19px,#0868f6 25px,#0560ee 28px,#0048d0 29.5px,#0040c8 30px);"></div>
<svg style="left:407px;top:7px" width="16" height="13" viewBox="0 0 16 13" shape-rendering="crispEdges"><rect x="0" y="0" width="16" height="13" fill="#000"/><rect x="1" y="1" width="14" height="2" fill="#000080"/><rect x="1" y="3" width="14" height="9" fill="#808080"/><rect x="1" y="4" width="3" height="2" fill="#fff"/><rect x="5" y="4" width="3" height="2" fill="#fff"/><rect x="9" y="4" width="3" height="2" fill="#fff"/><rect x="13" y="4" width="2" height="2" fill="#fff"/><rect x="1" y="7" width="3" height="2" fill="#fff"/><rect x="5" y="7" width="3" height="2" fill="#fff"/><rect x="9" y="7" width="3" height="2" fill="#fff"/><rect x="13" y="7" width="2" height="2" fill="#fff"/><rect x="1" y="10" width="3" height="2" fill="#fff"/><rect x="5" y="10" width="3" height="2" fill="#fff"/><rect x="9" y="10" width="3" height="2" fill="#fff"/><rect x="13" y="10" width="2" height="2" fill="#fff"/></svg><div class="t" style="left:427px;top:6.5px;font-weight:bold;font-size:13.5px;line-height:16px;color:#fff;letter-spacing:-.33px;text-shadow:1px 1px 0 #0a2a8a;">table_teamformationnames</div>
<div class="a" style="left:405px;top:27px;width:300px;height:281px;background:#808080;border-top:2px solid #8f8c7c;border-left:2px solid #8f8c7c"></div>
<div class="a" style="left:407px;top:29px;width:150px;height:279px;overflow:hidden"><div class="hc" style="left:0;top:0;width:16px"></div><div class="hc r" style="left:16px;top:0;width:67px"><span class="msr">formationid</span></div><div class="hc l" style="left:83px;top:0;width:67px"><span class="ms">formationname</span></div><div class="hc" style="left:0;top:16px;width:16px"></div>
<svg style="left:5px;top:19px" width="6" height="9" viewBox="0 0 6 9"><path d="M0 0 L5.5 4.5 L0 9 Z" fill="#000"/></svg><div class="dc r" style="left:16px;top:16px;width:67px"><span class="msr">0</span></div><div class="dc l" style="left:83px;top:16px;width:67px"><span class="ms">Not Set</span></div><div class="hc" style="left:0;top:32px;width:16px"></div><div class="dc r" style="left:16px;top:32px;width:67px"><span class="msr">1</span></div><div class="dc l" style="left:83px;top:32px;width:67px"><span class="ms">3_5_2A</span></div><div class="hc" style="left:0;top:48px;width:16px"></div><div class="dc r" style="left:16px;top:48px;width:67px"><span class="msr">2</span></div><div class="dc l" style="left:83px;top:48px;width:67px"><span class="ms">3_5_2D</span></div><div class="hc" style="left:0;top:64px;width:16px"></div><div class="dc r" style="left:16px;top:64px;width:67px"><span class="msr">3</span></div><div class="dc l" style="left:83px;top:64px;width:67px"><span class="ms">3_5_2N</span></div><div class="hc" style="left:0;top:80px;width:16px"></div><div class="dc r" style="left:16px;top:80px;width:67px"><span class="msr">4</span></div><div class="dc l" style="left:83px;top:80px;width:67px"><span class="ms">4_3_3N</span></div><div class="hc" style="left:0;top:96px;width:16px"></div><div class="dc r" style="left:16px;top:96px;width:67px"><span class="msr">5</span></div><div class="dc l" style="left:83px;top:96px;width:67px"><span class="ms">4_3_3D</span></div><div class="hc" style="left:0;top:112px;width:16px"></div><div class="dc r" style="left:16px;top:112px;width:67px"><span class="msr">6</span></div><div class="dc l" style="left:83px;top:112px;width:67px"><span class="ms">4_3_3A</span></div><div class="hc" style="left:0;top:128px;width:16px"></div><div class="dc r" style="left:16px;top:128px;width:67px"><span class="msr">7</span></div><div class="dc l" style="left:83px;top:128px;width:67px"><span class="ms">4_4_2N</span></div><div class="hc" style="left:0;top:144px;width:16px"></div><div class="dc r" style="left:16px;top:144px;width:67px"><span class="msr">8</span></div><div class="dc l" style="left:83px;top:144px;width:67px"><span class="ms">4_4_2D</span></div><div class="hc" style="left:0;top:160px;width:16px"></div><div class="dc r" style="left:16px;top:160px;width:67px"><span class="msr">9</span></div><div class="dc l" style="left:83px;top:160px;width:67px"><span class="ms">4_4_2A</span></div><div class="hc" style="left:0;top:176px;width:16px"></div><div class="dc r" style="left:16px;top:176px;width:67px"><span class="msr">10</span></div><div class="dc l" style="left:83px;top:176px;width:67px"><span class="ms">5_3_2N</span></div><div class="hc" style="left:0;top:192px;width:16px"></div><div class="dc r" style="left:16px;top:192px;width:67px"><span class="msr">11</span></div><div class="dc l" style="left:83px;top:192px;width:67px"><span class="ms">5_3_2D</span></div><div class="hc" style="left:0;top:208px;width:16px"></div><div class="dc r" style="left:16px;top:208px;width:67px"><span class="msr">12</span></div><div class="dc l" style="left:83px;top:208px;width:67px"><span class="ms">5_3_2A</span></div><div class="hc" style="left:0;top:224px;width:16px"></div><div class="dc r" style="left:16px;top:224px;width:67px"><span class="msr">13</span></div><div class="dc l" style="left:83px;top:224px;width:67px"><span class="ms">5_2_3N</span></div><div class="hc" style="left:0;top:240px;width:16px"></div><div class="dc r" style="left:16px;top:240px;width:67px"><span class="msr">14</span></div><div class="dc l" style="left:83px;top:240px;width:67px"><span class="ms">5_2_3D</span></div><div class="hc" style="left:0;top:256px;width:16px"></div><div class="dc r" style="left:16px;top:256px;width:67px"><span class="msr">15</span></div><div class="dc l" style="left:83px;top:256px;width:67px"><span class="ms">5_2_3A</span></div><div class="hc" style="left:0;top:272px;width:16px"></div><div class="dc r" style="left:16px;top:272px;width:67px"><span class="msr">16</span></div><div class="dc l" style="left:83px;top:272px;width:67px"><span class="ms">4_5_1N</span></div></div>
<div class="a" style="left:405px;top:308px;width:300px;height:29px;background:#ece9d8"></div>
<svg style="left:410px;top:316px" width="14" height="13" viewBox="0 0 14 13" shape-rendering="crispEdges"><rect x="0.5" y="0.5" width="5" height="2" fill="#fff" stroke="#000"/><rect x="0.5" y="4.5" width="5" height="2" fill="#fff" stroke="#000"/><rect x="0.5" y="8.5" width="5" height="2" fill="#fff" stroke="#000"/><rect x="0" y="12" width="7" height="1" fill="#000"/><rect x="8.5" y="0.5" width="2" height="2" fill="#fff" stroke="#000"/><rect x="9.5" y="4.5" width="3" height="2" fill="#fff" stroke="#000"/></svg>
<div class="a" style="left:428px;top:312px;width:22px;height:21px;background:#fff;border:1px solid #98b0d8;border-radius:3px"></div>
<svg style="left:431.5px;top:314px" width="15" height="16" viewBox="0 0 15 16" shape-rendering="crispEdges"><rect x="0" y="0" width="15" height="16" fill="#000"/><rect x="1" y="2" width="13" height="11" fill="#fff"/><rect x="4" y="2" width="1" height="11" fill="#000"/><rect x="9" y="2" width="1" height="11" fill="#000"/><rect x="1" y="4" width="13" height="1" fill="#000"/><rect x="1" y="7" width="13" height="1" fill="#000"/><rect x="1" y="10" width="13" height="1" fill="#000"/><rect x="2" y="14" width="1" height="1" fill="#fff"/><rect x="4" y="14" width="2" height="1" fill="#fff"/><rect x="7" y="14" width="6" height="1" fill="#fff"/></svg>
<svg style="left:462px;top:317px" width="16" height="10" viewBox="0 0 16 10"><path d="M0 0 L5.5 5 L0 10 Z" fill="#000"/><path d="M11 1.5 V8.5 M8 3 L14 7 M14 3 L8 7" stroke="#000" stroke-width="1.1" fill="none"/></svg>
<svg style="left:485px;top:316px" width="14" height="12" viewBox="0 0 14 12"><path d="M0 1 L4.5 6 L0 11 Z" fill="#000"/><path d="M3.5 0.5 L13.5 11.5 M12.5 0.5 L4.5 11.5" stroke="#000" stroke-width="1.5" fill="none"/></svg>
<svg style="left:508px;top:317px" width="14" height="11" viewBox="0 0 14 11"><path d="M3.5 5.5 Q7 1.5 10.5 3.5 Q13.5 6 10 10" stroke="#fff" stroke-width="1.2" fill="none"/><path d="M1 7.5 L2 2.5 L6.5 6 Z" fill="#fff"/><path d="M2.5 4.5 Q6 0.5 9.5 2.5 Q12.5 5 9 9" stroke="#aca899" stroke-width="1.2" fill="none"/><path d="M0 6.5 L1 1.5 L5.5 5 Z" fill="#aca899"/></svg>
<svg style="left:536px;top:316px" width="15" height="13" viewBox="0 0 15 13"><path d="M1 1 H14 L9 7 V12 L6 10.5 V7 Z" fill="none" stroke="#000" stroke-width="1.7" stroke-linejoin="miter"/></svg>
<svg style="left:556.5px;top:316px" width="16" height="13" viewBox="0 0 16 13" shape-rendering="crispEdges"><path d="M3 0 H6 V3 H7 V5 H9 V3 H10 V0 H13 V3 L16 9 V13 H10 V8 H6 V13 H0 V9 L3 3 Z" fill="#000"/><rect x="2" y="9" width="1" height="3" fill="#fff"/><rect x="11" y="9" width="1" height="3" fill="#fff"/><rect x="4" y="4" width="1" height="3" fill="#fff"/><rect x="12" y="4" width="1" height="3" fill="#fff"/></svg>
<svg style="left:580px;top:316px" width="13" height="13" viewBox="0 0 13 13"><path d="M4.5 1.5 Q1 4 1.8 8 Q2.2 10 4 11.5" stroke="#000" stroke-width="2" fill="none"/><path d="M8.5 11.5 Q12 9 11.2 5 Q10.8 3 9 1.5" stroke="#000" stroke-width="2" fill="none"/><path d="M2.5 0 H6.5 V4 Z" fill="#000"/><path d="M10.5 13 H6.5 V9 Z" fill="#000"/></svg>
<div class="a" style="left:402px;top:46px;width:1px;height:292px;background:repeating-linear-gradient(180deg,#dfe8ff 0,#dfe8ff 1px,transparent 1px,transparent 3px)"></div>
<div class="a" style="left:495px;top:167px;width:76px;height:16px;background:#ffffe1;border:1px solid #000"></div><div class="t" style="left:497px;top:167.5px;line-height:14px;font-size:11px;letter-spacing:-.2px">formationname</div></div><div class="a sb" style="left:923px;top:76px;width:17px;height:472px"></div><div class="sbtn" style="left:924px;top:76px;width:15px;height:16px"></div>
<svg style="left:924px;top:76.5px" width="15" height="15" viewBox="0 0 15 15"><path d="M4 9 L7.5 5.5 L11 9" fill="none" stroke="#4d6185" stroke-width="2.2"/></svg><div class="sbtn" style="left:924px;top:531px;width:15px;height:16px"></div>
<svg style="left:924px;top:531.5px" width="15" height="15" viewBox="0 0 15 15"><path d="M4 6 L7.5 9.5 L11 6" fill="none" stroke="#4d6185" stroke-width="2.2"/></svg><div class="thumbv" style="left:924px;top:100px;width:15px;height:343px"></div>
<div class="a" style="left:928px;top:267px;width:7px;height:8px;background:repeating-linear-gradient(180deg,#eef3ff 0,#eef3ff 1px,#8ea5e6 1px,#8ea5e6 2px)"></div><div class="a sb" style="left:266px;top:548px;width:657px;height:17px"></div><div class="sbtn" style="left:266px;top:549px;width:16px;height:15px"></div>
<svg style="left:266.5px;top:549px" width="15" height="15" viewBox="0 0 15 15"><path d="M9 4 L5.5 7.5 L9 11" fill="none" stroke="#4d6185" stroke-width="2.2"/></svg><div class="sbtn" style="left:906px;top:549px;width:16px;height:15px"></div>
<svg style="left:906.5px;top:549px" width="15" height="15" viewBox="0 0 15 15"><path d="M6 4 L9.5 7.5 L6 11" fill="none" stroke="#4d6185" stroke-width="2.2"/></svg><div class="thumbh" style="left:291px;top:549px;width:542px;height:15px"></div>
<div class="a" style="left:558px;top:553px;width:8px;height:7px;background:repeating-linear-gradient(90deg,#8ea5e6 0,#8ea5e6 1px,#eef3ff 1px,#eef3ff 2px)"></div>
<div class="a" style="left:264px;top:569px;width:665px;height:41px;background:#ffffe1;border-top:2px solid #716f64;border-left:1px solid #aca899;border-bottom:2px solid #fff;border-right:1px solid #fff"></div><div class="a sb" style="left:912px;top:571px;width:16px;height:38px;background:#ffffe1"></div><div class="sbtn" style="left:912px;top:571px;width:15px;height:16px"></div>
<svg style="left:912px;top:571.5px" width="15" height="15" viewBox="0 0 15 15"><path d="M4 9 L7.5 5.5 L11 9" fill="none" stroke="#4d6185" stroke-width="2.2"/></svg><div class="sbtn" style="left:912px;top:591px;width:15px;height:16px"></div>
<svg style="left:912px;top:591.5px" width="15" height="15" viewBox="0 0 15 15"><path d="M4 6 L7.5 9.5 L11 6" fill="none" stroke="#4d6185" stroke-width="2.2"/></svg>
<svg style="left:933px;top:572px" width="6" height="6" viewBox="0 0 6 6"><path d="M0 0 L6 6 M6 0 L0 6" stroke="#000" stroke-width="1" fill="none"/></svg>
<svg style="left:932px;top:584px" width="7" height="6" viewBox="0 0 7 6" shape-rendering="crispEdges"><path d="M3 0.5 L0.5 3 L3 5.5" stroke="#000" fill="none"/><rect x="3" y="2" width="3" height="2" fill="#000"/></svg>
<svg style="left:272px;top:583px" width="10" height="16" viewBox="0 0 10 16" shape-rendering="crispEdges"><rect x="1" y="1" width="1" height="1" fill="#2030ff"/><rect x="4" y="0" width="1" height="1" fill="#2030ff"/><rect x="8" y="1" width="1" height="1" fill="#2030ff"/><path d="M2 4 H7 L9 6 V9 L7 11 V13 H3 V11 L1 9 V6 Z" fill="#f8e828" stroke="#504000" stroke-width="1"/><rect x="3" y="13" width="4" height="2" fill="#000"/><rect x="4" y="6" width="2" height="1" fill="#806000"/><rect x="5" y="7" width="1" height="2" fill="#806000"/><rect x="4" y="10" width="1" height="1" fill="#806000"/></svg><div class="t" style="left:290px;top:584px;line-height:14px;font-size:11px;letter-spacing:-.05px">Visit the <i style="letter-spacing:-.25px">blueshell Data Guy</i> homepage to get the <b style="letter-spacing:.55px">latest information</b>. <span style="color:#0000e0;text-decoration:underline;letter-spacing:.2px">More...</span></div>
<div class="a" style="left:4px;top:610px;width:938px;height:25px;background:linear-gradient(#9d9a8c 0,#9d9a8c 1px,#d0cdbd 1px,#ece9d8 2.5px,#ece9d8 19px,#d8d4c0 23.5px,#ede3c3 24px,#ede3c3 25px)"></div>
<svg style="left:928px;top:621px" width="14" height="14" viewBox="0 0 14 14" shape-rendering="crispEdges"><rect x="10" y="2" width="2" height="2" fill="#b8b4a0"/><rect x="11" y="3" width="1" height="1" fill="#fff"/><rect x="6" y="6" width="2" height="2" fill="#b8b4a0"/><rect x="7" y="7" width="1" height="1" fill="#fff"/><rect x="10" y="6" width="2" height="2" fill="#b8b4a0"/><rect x="11" y="7" width="1" height="1" fill="#fff"/><rect x="2" y="10" width="2" height="2" fill="#b8b4a0"/><rect x="3" y="11" width="1" height="1" fill="#fff"/><rect x="6" y="10" width="2" height="2" fill="#b8b4a0"/><rect x="7" y="11" width="1" height="1" fill="#fff"/><rect x="10" y="10" width="2" height="2" fill="#b8b4a0"/><rect x="11" y="11" width="1" height="1" fill="#fff"/></svg>
</body></html>
